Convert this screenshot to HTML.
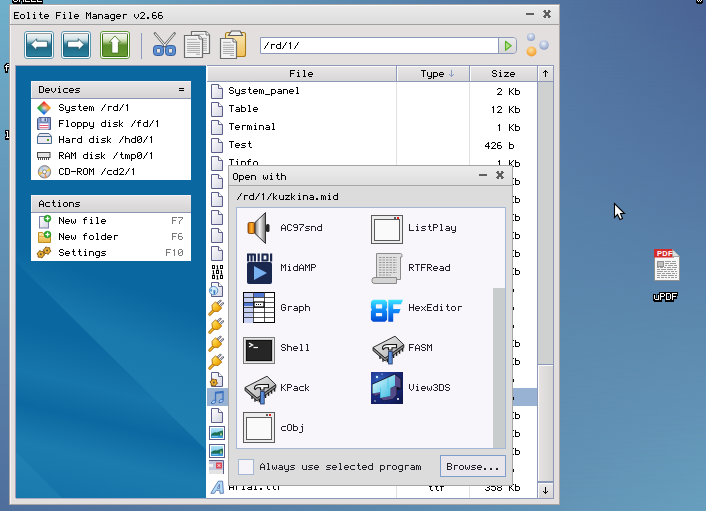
<!DOCTYPE html><html><head><meta charset="utf-8"><style>
html,body{margin:0;padding:0;width:706px;height:511px;overflow:hidden;position:relative}
body{background:linear-gradient(to right,#4f6e9b,#689fbe)}
.dtop{left:0;top:0;width:706px;height:511px;background:linear-gradient(to right,#70b0cb,#496394);-webkit-mask-image:linear-gradient(to bottom,#000,rgba(0,0,0,0));mask-image:linear-gradient(to bottom,#000,rgba(0,0,0,0))}
div{position:absolute;box-sizing:border-box}
.t{font:10px/10px "Liberation Mono",monospace;white-space:pre;color:#000;transform:translateZ(0);-webkit-text-stroke:0.2px currentColor}
.o{color:#fff;-webkit-text-stroke:0.3px #fff;text-shadow:1px 0 #000,-1px 0 #000,0 1px #000,0 -1px #000,1px 1px #000,-1px 1px #000,1px -1px #000,-1px -1px #000}
svg{position:absolute;overflow:visible}
</style></head><body>
<svg width="0" height="0" style="left:0;top:0"><defs>
<linearGradient id="docg" x1="0" y1="0" x2="1" y2="1"><stop offset="0" stop-color="#fff"/><stop offset="1" stop-color="#d4d4e2"/></linearGradient>
<linearGradient id="gold" x1="0" y1="0" x2="1" y2="1"><stop offset="0" stop-color="#fff0a0"/><stop offset="0.5" stop-color="#f8c020"/><stop offset="1" stop-color="#d88800"/></linearGradient>
<linearGradient id="fold" x1="0" y1="0" x2="0" y2="1"><stop offset="0" stop-color="#fbe8b0"/><stop offset="1" stop-color="#e8b440"/></linearGradient>
<radialGradient id="gb" cx="45%" cy="35%" r="65%"><stop offset="0" stop-color="#eef2fa"/><stop offset="1" stop-color="#8a9ec6"/></radialGradient>
<radialGradient id="go" cx="45%" cy="35%" r="65%"><stop offset="0" stop-color="#ffe0a0"/><stop offset="1" stop-color="#f09a28"/></radialGradient>
</defs></svg>
<div class="dtop"></div>
<svg style="left:13px;top:-5px" width="30" height="9" shape-rendering="crispEdges"><path d="M1 0h3v1h-3zM0 1h1v1h-1zM4 1h1v1h-1zM0 2h1v1h-1zM1 3h3v1h-3zM4 4h1v1h-1zM0 5h1v1h-1zM4 5h1v1h-1zM1 6h3v1h-3zM6 0h1v1h-1zM10 0h1v1h-1zM6 1h1v1h-1zM10 1h1v1h-1zM6 2h1v1h-1zM10 2h1v1h-1zM6 3h5v1h-5zM6 4h1v1h-1zM10 4h1v1h-1zM6 5h1v1h-1zM10 5h1v1h-1zM6 6h1v1h-1zM10 6h1v1h-1zM12 0h5v1h-5zM12 1h1v1h-1zM12 2h1v1h-1zM12 3h4v1h-4zM12 4h1v1h-1zM12 5h1v1h-1zM12 6h5v1h-5zM18 0h1v1h-1zM18 1h1v1h-1zM18 2h1v1h-1zM18 3h1v1h-1zM18 4h1v1h-1zM18 5h1v1h-1zM18 6h5v1h-5zM24 0h1v1h-1zM24 1h1v1h-1zM24 2h1v1h-1zM24 3h1v1h-1zM24 4h1v1h-1zM24 5h1v1h-1zM24 6h5v1h-5z" transform="translate(-1 0)" fill="#000"/><path d="M1 0h3v1h-3zM0 1h1v1h-1zM4 1h1v1h-1zM0 2h1v1h-1zM1 3h3v1h-3zM4 4h1v1h-1zM0 5h1v1h-1zM4 5h1v1h-1zM1 6h3v1h-3zM6 0h1v1h-1zM10 0h1v1h-1zM6 1h1v1h-1zM10 1h1v1h-1zM6 2h1v1h-1zM10 2h1v1h-1zM6 3h5v1h-5zM6 4h1v1h-1zM10 4h1v1h-1zM6 5h1v1h-1zM10 5h1v1h-1zM6 6h1v1h-1zM10 6h1v1h-1zM12 0h5v1h-5zM12 1h1v1h-1zM12 2h1v1h-1zM12 3h4v1h-4zM12 4h1v1h-1zM12 5h1v1h-1zM12 6h5v1h-5zM18 0h1v1h-1zM18 1h1v1h-1zM18 2h1v1h-1zM18 3h1v1h-1zM18 4h1v1h-1zM18 5h1v1h-1zM18 6h5v1h-5zM24 0h1v1h-1zM24 1h1v1h-1zM24 2h1v1h-1zM24 3h1v1h-1zM24 4h1v1h-1zM24 5h1v1h-1zM24 6h5v1h-5z" transform="translate(1 0)" fill="#000"/><path d="M1 0h3v1h-3zM0 1h1v1h-1zM4 1h1v1h-1zM0 2h1v1h-1zM1 3h3v1h-3zM4 4h1v1h-1zM0 5h1v1h-1zM4 5h1v1h-1zM1 6h3v1h-3zM6 0h1v1h-1zM10 0h1v1h-1zM6 1h1v1h-1zM10 1h1v1h-1zM6 2h1v1h-1zM10 2h1v1h-1zM6 3h5v1h-5zM6 4h1v1h-1zM10 4h1v1h-1zM6 5h1v1h-1zM10 5h1v1h-1zM6 6h1v1h-1zM10 6h1v1h-1zM12 0h5v1h-5zM12 1h1v1h-1zM12 2h1v1h-1zM12 3h4v1h-4zM12 4h1v1h-1zM12 5h1v1h-1zM12 6h5v1h-5zM18 0h1v1h-1zM18 1h1v1h-1zM18 2h1v1h-1zM18 3h1v1h-1zM18 4h1v1h-1zM18 5h1v1h-1zM18 6h5v1h-5zM24 0h1v1h-1zM24 1h1v1h-1zM24 2h1v1h-1zM24 3h1v1h-1zM24 4h1v1h-1zM24 5h1v1h-1zM24 6h5v1h-5z" transform="translate(0 -1)" fill="#000"/><path d="M1 0h3v1h-3zM0 1h1v1h-1zM4 1h1v1h-1zM0 2h1v1h-1zM1 3h3v1h-3zM4 4h1v1h-1zM0 5h1v1h-1zM4 5h1v1h-1zM1 6h3v1h-3zM6 0h1v1h-1zM10 0h1v1h-1zM6 1h1v1h-1zM10 1h1v1h-1zM6 2h1v1h-1zM10 2h1v1h-1zM6 3h5v1h-5zM6 4h1v1h-1zM10 4h1v1h-1zM6 5h1v1h-1zM10 5h1v1h-1zM6 6h1v1h-1zM10 6h1v1h-1zM12 0h5v1h-5zM12 1h1v1h-1zM12 2h1v1h-1zM12 3h4v1h-4zM12 4h1v1h-1zM12 5h1v1h-1zM12 6h5v1h-5zM18 0h1v1h-1zM18 1h1v1h-1zM18 2h1v1h-1zM18 3h1v1h-1zM18 4h1v1h-1zM18 5h1v1h-1zM18 6h5v1h-5zM24 0h1v1h-1zM24 1h1v1h-1zM24 2h1v1h-1zM24 3h1v1h-1zM24 4h1v1h-1zM24 5h1v1h-1zM24 6h5v1h-5z" transform="translate(0 1)" fill="#000"/><path d="M1 0h3v1h-3zM0 1h1v1h-1zM4 1h1v1h-1zM0 2h1v1h-1zM1 3h3v1h-3zM4 4h1v1h-1zM0 5h1v1h-1zM4 5h1v1h-1zM1 6h3v1h-3zM6 0h1v1h-1zM10 0h1v1h-1zM6 1h1v1h-1zM10 1h1v1h-1zM6 2h1v1h-1zM10 2h1v1h-1zM6 3h5v1h-5zM6 4h1v1h-1zM10 4h1v1h-1zM6 5h1v1h-1zM10 5h1v1h-1zM6 6h1v1h-1zM10 6h1v1h-1zM12 0h5v1h-5zM12 1h1v1h-1zM12 2h1v1h-1zM12 3h4v1h-4zM12 4h1v1h-1zM12 5h1v1h-1zM12 6h5v1h-5zM18 0h1v1h-1zM18 1h1v1h-1zM18 2h1v1h-1zM18 3h1v1h-1zM18 4h1v1h-1zM18 5h1v1h-1zM18 6h5v1h-5zM24 0h1v1h-1zM24 1h1v1h-1zM24 2h1v1h-1zM24 3h1v1h-1zM24 4h1v1h-1zM24 5h1v1h-1zM24 6h5v1h-5z" transform="translate(-1 -1)" fill="#000"/><path d="M1 0h3v1h-3zM0 1h1v1h-1zM4 1h1v1h-1zM0 2h1v1h-1zM1 3h3v1h-3zM4 4h1v1h-1zM0 5h1v1h-1zM4 5h1v1h-1zM1 6h3v1h-3zM6 0h1v1h-1zM10 0h1v1h-1zM6 1h1v1h-1zM10 1h1v1h-1zM6 2h1v1h-1zM10 2h1v1h-1zM6 3h5v1h-5zM6 4h1v1h-1zM10 4h1v1h-1zM6 5h1v1h-1zM10 5h1v1h-1zM6 6h1v1h-1zM10 6h1v1h-1zM12 0h5v1h-5zM12 1h1v1h-1zM12 2h1v1h-1zM12 3h4v1h-4zM12 4h1v1h-1zM12 5h1v1h-1zM12 6h5v1h-5zM18 0h1v1h-1zM18 1h1v1h-1zM18 2h1v1h-1zM18 3h1v1h-1zM18 4h1v1h-1zM18 5h1v1h-1zM18 6h5v1h-5zM24 0h1v1h-1zM24 1h1v1h-1zM24 2h1v1h-1zM24 3h1v1h-1zM24 4h1v1h-1zM24 5h1v1h-1zM24 6h5v1h-5z" transform="translate(1 1)" fill="#000"/><path d="M1 0h3v1h-3zM0 1h1v1h-1zM4 1h1v1h-1zM0 2h1v1h-1zM1 3h3v1h-3zM4 4h1v1h-1zM0 5h1v1h-1zM4 5h1v1h-1zM1 6h3v1h-3zM6 0h1v1h-1zM10 0h1v1h-1zM6 1h1v1h-1zM10 1h1v1h-1zM6 2h1v1h-1zM10 2h1v1h-1zM6 3h5v1h-5zM6 4h1v1h-1zM10 4h1v1h-1zM6 5h1v1h-1zM10 5h1v1h-1zM6 6h1v1h-1zM10 6h1v1h-1zM12 0h5v1h-5zM12 1h1v1h-1zM12 2h1v1h-1zM12 3h4v1h-4zM12 4h1v1h-1zM12 5h1v1h-1zM12 6h5v1h-5zM18 0h1v1h-1zM18 1h1v1h-1zM18 2h1v1h-1zM18 3h1v1h-1zM18 4h1v1h-1zM18 5h1v1h-1zM18 6h5v1h-5zM24 0h1v1h-1zM24 1h1v1h-1zM24 2h1v1h-1zM24 3h1v1h-1zM24 4h1v1h-1zM24 5h1v1h-1zM24 6h5v1h-5z" transform="translate(-1 1)" fill="#000"/><path d="M1 0h3v1h-3zM0 1h1v1h-1zM4 1h1v1h-1zM0 2h1v1h-1zM1 3h3v1h-3zM4 4h1v1h-1zM0 5h1v1h-1zM4 5h1v1h-1zM1 6h3v1h-3zM6 0h1v1h-1zM10 0h1v1h-1zM6 1h1v1h-1zM10 1h1v1h-1zM6 2h1v1h-1zM10 2h1v1h-1zM6 3h5v1h-5zM6 4h1v1h-1zM10 4h1v1h-1zM6 5h1v1h-1zM10 5h1v1h-1zM6 6h1v1h-1zM10 6h1v1h-1zM12 0h5v1h-5zM12 1h1v1h-1zM12 2h1v1h-1zM12 3h4v1h-4zM12 4h1v1h-1zM12 5h1v1h-1zM12 6h5v1h-5zM18 0h1v1h-1zM18 1h1v1h-1zM18 2h1v1h-1zM18 3h1v1h-1zM18 4h1v1h-1zM18 5h1v1h-1zM18 6h5v1h-5zM24 0h1v1h-1zM24 1h1v1h-1zM24 2h1v1h-1zM24 3h1v1h-1zM24 4h1v1h-1zM24 5h1v1h-1zM24 6h5v1h-5z" transform="translate(1 -1)" fill="#000"/><path d="M1 0h3v1h-3zM0 1h1v1h-1zM4 1h1v1h-1zM0 2h1v1h-1zM1 3h3v1h-3zM4 4h1v1h-1zM0 5h1v1h-1zM4 5h1v1h-1zM1 6h3v1h-3zM6 0h1v1h-1zM10 0h1v1h-1zM6 1h1v1h-1zM10 1h1v1h-1zM6 2h1v1h-1zM10 2h1v1h-1zM6 3h5v1h-5zM6 4h1v1h-1zM10 4h1v1h-1zM6 5h1v1h-1zM10 5h1v1h-1zM6 6h1v1h-1zM10 6h1v1h-1zM12 0h5v1h-5zM12 1h1v1h-1zM12 2h1v1h-1zM12 3h4v1h-4zM12 4h1v1h-1zM12 5h1v1h-1zM12 6h5v1h-5zM18 0h1v1h-1zM18 1h1v1h-1zM18 2h1v1h-1zM18 3h1v1h-1zM18 4h1v1h-1zM18 5h1v1h-1zM18 6h5v1h-5zM24 0h1v1h-1zM24 1h1v1h-1zM24 2h1v1h-1zM24 3h1v1h-1zM24 4h1v1h-1zM24 5h1v1h-1zM24 6h5v1h-5z" transform="translate(0 2)" fill="#000"/><path d="M1 0h3v1h-3zM0 1h1v1h-1zM4 1h1v1h-1zM0 2h1v1h-1zM1 3h3v1h-3zM4 4h1v1h-1zM0 5h1v1h-1zM4 5h1v1h-1zM1 6h3v1h-3zM6 0h1v1h-1zM10 0h1v1h-1zM6 1h1v1h-1zM10 1h1v1h-1zM6 2h1v1h-1zM10 2h1v1h-1zM6 3h5v1h-5zM6 4h1v1h-1zM10 4h1v1h-1zM6 5h1v1h-1zM10 5h1v1h-1zM6 6h1v1h-1zM10 6h1v1h-1zM12 0h5v1h-5zM12 1h1v1h-1zM12 2h1v1h-1zM12 3h4v1h-4zM12 4h1v1h-1zM12 5h1v1h-1zM12 6h5v1h-5zM18 0h1v1h-1zM18 1h1v1h-1zM18 2h1v1h-1zM18 3h1v1h-1zM18 4h1v1h-1zM18 5h1v1h-1zM18 6h5v1h-5zM24 0h1v1h-1zM24 1h1v1h-1zM24 2h1v1h-1zM24 3h1v1h-1zM24 4h1v1h-1zM24 5h1v1h-1zM24 6h5v1h-5z" transform="translate(1 2)" fill="#000"/><path d="M1 0h3v1h-3zM0 1h1v1h-1zM4 1h1v1h-1zM0 2h1v1h-1zM1 3h3v1h-3zM4 4h1v1h-1zM0 5h1v1h-1zM4 5h1v1h-1zM1 6h3v1h-3zM6 0h1v1h-1zM10 0h1v1h-1zM6 1h1v1h-1zM10 1h1v1h-1zM6 2h1v1h-1zM10 2h1v1h-1zM6 3h5v1h-5zM6 4h1v1h-1zM10 4h1v1h-1zM6 5h1v1h-1zM10 5h1v1h-1zM6 6h1v1h-1zM10 6h1v1h-1zM12 0h5v1h-5zM12 1h1v1h-1zM12 2h1v1h-1zM12 3h4v1h-4zM12 4h1v1h-1zM12 5h1v1h-1zM12 6h5v1h-5zM18 0h1v1h-1zM18 1h1v1h-1zM18 2h1v1h-1zM18 3h1v1h-1zM18 4h1v1h-1zM18 5h1v1h-1zM18 6h5v1h-5zM24 0h1v1h-1zM24 1h1v1h-1zM24 2h1v1h-1zM24 3h1v1h-1zM24 4h1v1h-1zM24 5h1v1h-1zM24 6h5v1h-5z" transform="translate(-1 2)" fill="#000"/><path d="M1 0h3v1h-3zM0 1h1v1h-1zM4 1h1v1h-1zM0 2h1v1h-1zM1 3h3v1h-3zM4 4h1v1h-1zM0 5h1v1h-1zM4 5h1v1h-1zM1 6h3v1h-3zM6 0h1v1h-1zM10 0h1v1h-1zM6 1h1v1h-1zM10 1h1v1h-1zM6 2h1v1h-1zM10 2h1v1h-1zM6 3h5v1h-5zM6 4h1v1h-1zM10 4h1v1h-1zM6 5h1v1h-1zM10 5h1v1h-1zM6 6h1v1h-1zM10 6h1v1h-1zM12 0h5v1h-5zM12 1h1v1h-1zM12 2h1v1h-1zM12 3h4v1h-4zM12 4h1v1h-1zM12 5h1v1h-1zM12 6h5v1h-5zM18 0h1v1h-1zM18 1h1v1h-1zM18 2h1v1h-1zM18 3h1v1h-1zM18 4h1v1h-1zM18 5h1v1h-1zM18 6h5v1h-5zM24 0h1v1h-1zM24 1h1v1h-1zM24 2h1v1h-1zM24 3h1v1h-1zM24 4h1v1h-1zM24 5h1v1h-1zM24 6h5v1h-5z" fill="#fff"/></svg>
<svg style="left:697px;top:-5px" width="6" height="9" shape-rendering="crispEdges"><path d="M0 2h1v1h-1zM4 2h1v1h-1zM0 3h1v1h-1zM4 3h1v1h-1zM0 4h1v1h-1zM2 4h1v1h-1zM4 4h1v1h-1zM0 5h1v1h-1zM2 5h1v1h-1zM4 5h1v1h-1zM1 6h1v1h-1zM3 6h1v1h-1z" transform="translate(-1 0)" fill="#000"/><path d="M0 2h1v1h-1zM4 2h1v1h-1zM0 3h1v1h-1zM4 3h1v1h-1zM0 4h1v1h-1zM2 4h1v1h-1zM4 4h1v1h-1zM0 5h1v1h-1zM2 5h1v1h-1zM4 5h1v1h-1zM1 6h1v1h-1zM3 6h1v1h-1z" transform="translate(1 0)" fill="#000"/><path d="M0 2h1v1h-1zM4 2h1v1h-1zM0 3h1v1h-1zM4 3h1v1h-1zM0 4h1v1h-1zM2 4h1v1h-1zM4 4h1v1h-1zM0 5h1v1h-1zM2 5h1v1h-1zM4 5h1v1h-1zM1 6h1v1h-1zM3 6h1v1h-1z" transform="translate(0 -1)" fill="#000"/><path d="M0 2h1v1h-1zM4 2h1v1h-1zM0 3h1v1h-1zM4 3h1v1h-1zM0 4h1v1h-1zM2 4h1v1h-1zM4 4h1v1h-1zM0 5h1v1h-1zM2 5h1v1h-1zM4 5h1v1h-1zM1 6h1v1h-1zM3 6h1v1h-1z" transform="translate(0 1)" fill="#000"/><path d="M0 2h1v1h-1zM4 2h1v1h-1zM0 3h1v1h-1zM4 3h1v1h-1zM0 4h1v1h-1zM2 4h1v1h-1zM4 4h1v1h-1zM0 5h1v1h-1zM2 5h1v1h-1zM4 5h1v1h-1zM1 6h1v1h-1zM3 6h1v1h-1z" transform="translate(-1 -1)" fill="#000"/><path d="M0 2h1v1h-1zM4 2h1v1h-1zM0 3h1v1h-1zM4 3h1v1h-1zM0 4h1v1h-1zM2 4h1v1h-1zM4 4h1v1h-1zM0 5h1v1h-1zM2 5h1v1h-1zM4 5h1v1h-1zM1 6h1v1h-1zM3 6h1v1h-1z" transform="translate(1 1)" fill="#000"/><path d="M0 2h1v1h-1zM4 2h1v1h-1zM0 3h1v1h-1zM4 3h1v1h-1zM0 4h1v1h-1zM2 4h1v1h-1zM4 4h1v1h-1zM0 5h1v1h-1zM2 5h1v1h-1zM4 5h1v1h-1zM1 6h1v1h-1zM3 6h1v1h-1z" transform="translate(-1 1)" fill="#000"/><path d="M0 2h1v1h-1zM4 2h1v1h-1zM0 3h1v1h-1zM4 3h1v1h-1zM0 4h1v1h-1zM2 4h1v1h-1zM4 4h1v1h-1zM0 5h1v1h-1zM2 5h1v1h-1zM4 5h1v1h-1zM1 6h1v1h-1zM3 6h1v1h-1z" transform="translate(1 -1)" fill="#000"/><path d="M0 2h1v1h-1zM4 2h1v1h-1zM0 3h1v1h-1zM4 3h1v1h-1zM0 4h1v1h-1zM2 4h1v1h-1zM4 4h1v1h-1zM0 5h1v1h-1zM2 5h1v1h-1zM4 5h1v1h-1zM1 6h1v1h-1zM3 6h1v1h-1z" transform="translate(0 2)" fill="#000"/><path d="M0 2h1v1h-1zM4 2h1v1h-1zM0 3h1v1h-1zM4 3h1v1h-1zM0 4h1v1h-1zM2 4h1v1h-1zM4 4h1v1h-1zM0 5h1v1h-1zM2 5h1v1h-1zM4 5h1v1h-1zM1 6h1v1h-1zM3 6h1v1h-1z" transform="translate(1 2)" fill="#000"/><path d="M0 2h1v1h-1zM4 2h1v1h-1zM0 3h1v1h-1zM4 3h1v1h-1zM0 4h1v1h-1zM2 4h1v1h-1zM4 4h1v1h-1zM0 5h1v1h-1zM2 5h1v1h-1zM4 5h1v1h-1zM1 6h1v1h-1zM3 6h1v1h-1z" transform="translate(-1 2)" fill="#000"/><path d="M0 2h1v1h-1zM4 2h1v1h-1zM0 3h1v1h-1zM4 3h1v1h-1zM0 4h1v1h-1zM2 4h1v1h-1zM4 4h1v1h-1zM0 5h1v1h-1zM2 5h1v1h-1zM4 5h1v1h-1zM1 6h1v1h-1zM3 6h1v1h-1z" fill="#fff"/></svg>
<svg style="left:5px;top:64px" width="6" height="9" shape-rendering="crispEdges"><path d="M2 0h2v1h-2zM1 1h1v1h-1zM0 2h4v1h-4zM1 3h1v1h-1zM1 4h1v1h-1zM1 5h1v1h-1zM1 6h1v1h-1z" transform="translate(-1 0)" fill="#000"/><path d="M2 0h2v1h-2zM1 1h1v1h-1zM0 2h4v1h-4zM1 3h1v1h-1zM1 4h1v1h-1zM1 5h1v1h-1zM1 6h1v1h-1z" transform="translate(1 0)" fill="#000"/><path d="M2 0h2v1h-2zM1 1h1v1h-1zM0 2h4v1h-4zM1 3h1v1h-1zM1 4h1v1h-1zM1 5h1v1h-1zM1 6h1v1h-1z" transform="translate(0 -1)" fill="#000"/><path d="M2 0h2v1h-2zM1 1h1v1h-1zM0 2h4v1h-4zM1 3h1v1h-1zM1 4h1v1h-1zM1 5h1v1h-1zM1 6h1v1h-1z" transform="translate(0 1)" fill="#000"/><path d="M2 0h2v1h-2zM1 1h1v1h-1zM0 2h4v1h-4zM1 3h1v1h-1zM1 4h1v1h-1zM1 5h1v1h-1zM1 6h1v1h-1z" transform="translate(-1 -1)" fill="#000"/><path d="M2 0h2v1h-2zM1 1h1v1h-1zM0 2h4v1h-4zM1 3h1v1h-1zM1 4h1v1h-1zM1 5h1v1h-1zM1 6h1v1h-1z" transform="translate(1 1)" fill="#000"/><path d="M2 0h2v1h-2zM1 1h1v1h-1zM0 2h4v1h-4zM1 3h1v1h-1zM1 4h1v1h-1zM1 5h1v1h-1zM1 6h1v1h-1z" transform="translate(-1 1)" fill="#000"/><path d="M2 0h2v1h-2zM1 1h1v1h-1zM0 2h4v1h-4zM1 3h1v1h-1zM1 4h1v1h-1zM1 5h1v1h-1zM1 6h1v1h-1z" transform="translate(1 -1)" fill="#000"/><path d="M2 0h2v1h-2zM1 1h1v1h-1zM0 2h4v1h-4zM1 3h1v1h-1zM1 4h1v1h-1zM1 5h1v1h-1zM1 6h1v1h-1z" transform="translate(0 2)" fill="#000"/><path d="M2 0h2v1h-2zM1 1h1v1h-1zM0 2h4v1h-4zM1 3h1v1h-1zM1 4h1v1h-1zM1 5h1v1h-1zM1 6h1v1h-1z" transform="translate(1 2)" fill="#000"/><path d="M2 0h2v1h-2zM1 1h1v1h-1zM0 2h4v1h-4zM1 3h1v1h-1zM1 4h1v1h-1zM1 5h1v1h-1zM1 6h1v1h-1z" transform="translate(-1 2)" fill="#000"/><path d="M2 0h2v1h-2zM1 1h1v1h-1zM0 2h4v1h-4zM1 3h1v1h-1zM1 4h1v1h-1zM1 5h1v1h-1zM1 6h1v1h-1z" fill="#fff"/></svg>
<svg style="left:5px;top:131px" width="6" height="9" shape-rendering="crispEdges"><path d="M1 0h2v1h-2zM2 1h1v1h-1zM2 2h1v1h-1zM2 3h1v1h-1zM2 4h1v1h-1zM2 5h1v1h-1zM1 6h3v1h-3z" transform="translate(-1 0)" fill="#000"/><path d="M1 0h2v1h-2zM2 1h1v1h-1zM2 2h1v1h-1zM2 3h1v1h-1zM2 4h1v1h-1zM2 5h1v1h-1zM1 6h3v1h-3z" transform="translate(1 0)" fill="#000"/><path d="M1 0h2v1h-2zM2 1h1v1h-1zM2 2h1v1h-1zM2 3h1v1h-1zM2 4h1v1h-1zM2 5h1v1h-1zM1 6h3v1h-3z" transform="translate(0 -1)" fill="#000"/><path d="M1 0h2v1h-2zM2 1h1v1h-1zM2 2h1v1h-1zM2 3h1v1h-1zM2 4h1v1h-1zM2 5h1v1h-1zM1 6h3v1h-3z" transform="translate(0 1)" fill="#000"/><path d="M1 0h2v1h-2zM2 1h1v1h-1zM2 2h1v1h-1zM2 3h1v1h-1zM2 4h1v1h-1zM2 5h1v1h-1zM1 6h3v1h-3z" transform="translate(-1 -1)" fill="#000"/><path d="M1 0h2v1h-2zM2 1h1v1h-1zM2 2h1v1h-1zM2 3h1v1h-1zM2 4h1v1h-1zM2 5h1v1h-1zM1 6h3v1h-3z" transform="translate(1 1)" fill="#000"/><path d="M1 0h2v1h-2zM2 1h1v1h-1zM2 2h1v1h-1zM2 3h1v1h-1zM2 4h1v1h-1zM2 5h1v1h-1zM1 6h3v1h-3z" transform="translate(-1 1)" fill="#000"/><path d="M1 0h2v1h-2zM2 1h1v1h-1zM2 2h1v1h-1zM2 3h1v1h-1zM2 4h1v1h-1zM2 5h1v1h-1zM1 6h3v1h-3z" transform="translate(1 -1)" fill="#000"/><path d="M1 0h2v1h-2zM2 1h1v1h-1zM2 2h1v1h-1zM2 3h1v1h-1zM2 4h1v1h-1zM2 5h1v1h-1zM1 6h3v1h-3z" transform="translate(0 2)" fill="#000"/><path d="M1 0h2v1h-2zM2 1h1v1h-1zM2 2h1v1h-1zM2 3h1v1h-1zM2 4h1v1h-1zM2 5h1v1h-1zM1 6h3v1h-3z" transform="translate(1 2)" fill="#000"/><path d="M1 0h2v1h-2zM2 1h1v1h-1zM2 2h1v1h-1zM2 3h1v1h-1zM2 4h1v1h-1zM2 5h1v1h-1zM1 6h3v1h-3z" transform="translate(-1 2)" fill="#000"/><path d="M1 0h2v1h-2zM2 1h1v1h-1zM2 2h1v1h-1zM2 3h1v1h-1zM2 4h1v1h-1zM2 5h1v1h-1zM1 6h3v1h-3z" fill="#fff"/></svg>
<div style="left:9px;top:4px;width:551px;height:501px;background:#e3dfdf;border:1px solid #a8a4a4;"></div>
<div style="left:10px;top:5px;width:549px;height:1px;background:#fafafa"></div>
<div style="left:10px;top:5px;width:1px;height:499px;background:#f4f2f2"></div>
<div style="left:11px;top:6px;width:548px;height:19px;background:linear-gradient(#eaeaea,#dcdcdc)"></div>
<div style="left:10px;top:24px;width:549px;height:1px;background:#a0a0a0"></div>
<svg style="left:14px;top:12px" width="150" height="9" shape-rendering="crispEdges"><path d="M0 0h5v1h-5zM0 1h1v1h-1zM0 2h1v1h-1zM0 3h4v1h-4zM0 4h1v1h-1zM0 5h1v1h-1zM0 6h5v1h-5zM7 2h3v1h-3zM6 3h1v1h-1zM10 3h1v1h-1zM6 4h1v1h-1zM10 4h1v1h-1zM6 5h1v1h-1zM10 5h1v1h-1zM7 6h3v1h-3zM13 0h2v1h-2zM14 1h1v1h-1zM14 2h1v1h-1zM14 3h1v1h-1zM14 4h1v1h-1zM14 5h1v1h-1zM13 6h3v1h-3zM20 0h1v1h-1zM19 2h2v1h-2zM20 3h1v1h-1zM20 4h1v1h-1zM20 5h1v1h-1zM19 6h3v1h-3zM26 0h1v1h-1zM26 1h1v1h-1zM25 2h3v1h-3zM26 3h1v1h-1zM26 4h1v1h-1zM26 5h1v1h-1zM27 6h2v1h-2zM31 2h3v1h-3zM30 3h1v1h-1zM34 3h1v1h-1zM30 4h5v1h-5zM30 5h1v1h-1zM31 6h3v1h-3zM42 0h5v1h-5zM42 1h1v1h-1zM42 2h1v1h-1zM42 3h4v1h-4zM42 4h1v1h-1zM42 5h1v1h-1zM42 6h1v1h-1zM50 0h1v1h-1zM49 2h2v1h-2zM50 3h1v1h-1zM50 4h1v1h-1zM50 5h1v1h-1zM49 6h3v1h-3zM55 0h2v1h-2zM56 1h1v1h-1zM56 2h1v1h-1zM56 3h1v1h-1zM56 4h1v1h-1zM56 5h1v1h-1zM55 6h3v1h-3zM61 2h3v1h-3zM60 3h1v1h-1zM64 3h1v1h-1zM60 4h5v1h-5zM60 5h1v1h-1zM61 6h3v1h-3zM72 0h1v1h-1zM76 0h1v1h-1zM72 1h2v1h-2zM75 1h2v1h-2zM72 2h1v1h-1zM74 2h1v1h-1zM76 2h1v1h-1zM72 3h1v1h-1zM74 3h1v1h-1zM76 3h1v1h-1zM72 4h1v1h-1zM76 4h1v1h-1zM72 5h1v1h-1zM76 5h1v1h-1zM72 6h1v1h-1zM76 6h1v1h-1zM79 2h3v1h-3zM82 3h1v1h-1zM79 4h4v1h-4zM78 5h1v1h-1zM82 5h1v1h-1zM79 6h4v1h-4zM84 2h4v1h-4zM84 3h1v1h-1zM88 3h1v1h-1zM84 4h1v1h-1zM88 4h1v1h-1zM84 5h1v1h-1zM88 5h1v1h-1zM84 6h1v1h-1zM88 6h1v1h-1zM91 2h3v1h-3zM94 3h1v1h-1zM91 4h4v1h-4zM90 5h1v1h-1zM94 5h1v1h-1zM91 6h4v1h-4zM97 2h4v1h-4zM96 3h1v1h-1zM100 3h1v1h-1zM96 4h1v1h-1zM100 4h1v1h-1zM96 5h1v1h-1zM100 5h1v1h-1zM97 6h4v1h-4zM100 7h1v1h-1zM97 8h3v1h-3zM103 2h3v1h-3zM102 3h1v1h-1zM106 3h1v1h-1zM102 4h5v1h-5zM102 5h1v1h-1zM103 6h3v1h-3zM109 2h4v1h-4zM109 3h1v1h-1zM109 4h1v1h-1zM109 5h1v1h-1zM109 6h1v1h-1zM120 2h1v1h-1zM124 2h1v1h-1zM120 3h1v1h-1zM124 3h1v1h-1zM120 4h1v1h-1zM124 4h1v1h-1zM121 5h1v1h-1zM123 5h1v1h-1zM122 6h1v1h-1zM127 0h3v1h-3zM126 1h1v1h-1zM130 1h1v1h-1zM130 2h1v1h-1zM129 3h1v1h-1zM128 4h1v1h-1zM127 5h1v1h-1zM126 6h5v1h-5zM133 5h2v1h-2zM133 6h2v1h-2zM139 0h3v1h-3zM138 1h1v1h-1zM138 2h1v1h-1zM138 3h4v1h-4zM138 4h1v1h-1zM142 4h1v1h-1zM138 5h1v1h-1zM142 5h1v1h-1zM139 6h3v1h-3zM145 0h3v1h-3zM144 1h1v1h-1zM144 2h1v1h-1zM144 3h4v1h-4zM144 4h1v1h-1zM148 4h1v1h-1zM144 5h1v1h-1zM148 5h1v1h-1zM145 6h3v1h-3z" fill="#000"/></svg>
<div style="left:526px;top:13px;width:8px;height:2px;background:#606060"></div>
<svg style="left:543px;top:10px" width="8" height="8" shape-rendering="crispEdges"><path d="M1 0h2v1h-2zM5 0h2v1h-2zM0 1h3v1h-3zM5 1h3v1h-3zM1 2h6v1h-6zM2 3h4v1h-4zM2 4h4v1h-4zM1 5h6v1h-6zM0 6h3v1h-3zM5 6h3v1h-3zM1 7h2v1h-2zM5 7h2v1h-2z" fill="#606060"/></svg>
<div style="left:24px;top:31px;width:30px;height:28px;border:1px solid #5898b0;border-radius:3px;background:#fff"></div>
<div style="left:26px;top:33px;width:26px;height:24px;border:1px solid #1e5e7a;border-top-color:#9a9a9a;border-radius:2px;background:linear-gradient(#eef2f4 0%, #d6e4e8 22%, #a8c8d4 32%, #2f7c98 46%, #1f6a86 60%, #2a82a0 100%)"></div>
<svg style="left:24px;top:31px" width="30" height="28"><path d="M7 13.5L12.7 7.7V10.2H23.4V16.2H12.7V19.3Z" fill="#fff" stroke="#174a60" stroke-width="0.8"/></svg>
<div style="left:61px;top:31px;width:30px;height:28px;border:1px solid #5898b0;border-radius:3px;background:#fff"></div>
<div style="left:63px;top:33px;width:26px;height:24px;border:1px solid #1e5e7a;border-top-color:#9a9a9a;border-radius:2px;background:linear-gradient(#eef2f4 0%, #d6e4e8 22%, #a8c8d4 32%, #2f7c98 46%, #1f6a86 60%, #2a82a0 100%)"></div>
<svg style="left:61px;top:31px" width="30" height="28"><path d="M23 13.5L17.3 7.7V10.2H6.6V16.2H17.3V19.3Z" fill="#fff" stroke="#174a60" stroke-width="0.8"/></svg>
<div style="left:100px;top:31px;width:30px;height:28px;border:1px solid #5a9a30;border-radius:3px;background:#fff"></div>
<div style="left:102px;top:33px;width:26px;height:24px;border:1px solid #3e6e1a;border-top-color:#9a9a9a;border-radius:2px;background:linear-gradient(#f2f6ea 0%, #dfe9cf 22%, #b8d098 34%, #5a8e2a 50%, #5c902c 70%, #6a9c34 100%)"></div>
<svg style="left:100px;top:31px" width="30" height="28"><path d="M14.9 4.9L20.5 11.1H18.4V22.1H11.8V11.1H9.3Z" fill="#fff" stroke="#3a6a18" stroke-width="0.8"/></svg>
<div style="left:141px;top:33px;width:1px;height:26px;background:#8c9ac0"></div>
<svg style="left:148px;top:28px" width="32" height="32" viewBox="0 0 32 32"><path d="M7 5.5L17.5 18M26.5 5.5L16 18" stroke="#5a5a5a" stroke-width="2.6" stroke-linecap="round"/>
<path d="M7 5.5L17.5 18M26.5 5.5L16 18" stroke="#fafafa" stroke-width="1.1"/>
<rect x="5.5" y="17.5" width="10" height="10" rx="3" fill="#5a90d4" stroke="#2a5090" stroke-width="0.9"/>
<rect x="17.5" y="17.5" width="10" height="10" rx="3" fill="#5a90d4" stroke="#2a5090" stroke-width="0.9"/>
<rect x="8.5" y="20.5" width="4" height="4.5" rx="1" fill="#e6e2e2" stroke="#2a5090" stroke-width="0.7"/>
<rect x="20.5" y="20.5" width="4" height="4.5" rx="1" fill="#e6e2e2" stroke="#2a5090" stroke-width="0.7"/></svg>
<svg style="left:180px;top:28px" width="32" height="32" viewBox="0 0 32 32"><path d="M11.5 3.5H26L29.5 7V25.5H11.5Z" fill="#f2f2f2" stroke="#6a6a6a" stroke-width="1.2"/>
<path d="M26 3.5V7H29.5" fill="#fff" stroke="#6a6a6a" stroke-width="1"/>
<path d="M14 6.3H24M23 10.3H27M23 12.3H27M23 14.3H27M23 16.3H27M23 18.3H27M23 20.3H27M23 22.3H27" stroke="#a4a4a4" stroke-width="0.9"/>
<path d="M4.5 7.5H19L22.5 11V29.5H4.5Z" fill="#f2f2f2" stroke="#6a6a6a" stroke-width="1.2"/>
<path d="M19 7.5V11H22.5" fill="#fff" stroke="#6a6a6a" stroke-width="1"/>
<path d="M7 11.3H17M7 14.4H20M7 16.4H20M7 18.5H20M7 20.4H20M7 22.4H20M7 24.4H20M16 26.3H20" stroke="#a4a4a4" stroke-width="0.9"/></svg>
<svg style="left:216px;top:28px" width="32" height="32" viewBox="0 0 32 32"><defs><linearGradient id="clipg" x1="0" y1="0" x2="0" y2="1"><stop offset="0" stop-color="#f8e8b8"/><stop offset="1" stop-color="#f0c058"/></linearGradient></defs>
<rect x="9.5" y="4.5" width="20" height="24" rx="2" fill="url(#clipg)" stroke="#a87a18" stroke-width="1.1"/>
<path d="M12.5 7.5L15.5 3H24L26.5 7.5Z" fill="#f0f0f0" stroke="#5a5a5a" stroke-width="1.1"/>
<path d="M4.5 10.5H17L20.5 14V30.5H4.5Z" fill="#f2f2f2" stroke="#6a6a6a" stroke-width="1.2"/>
<path d="M17 10.5V14H20.5" fill="#fff" stroke="#6a6a6a" stroke-width="1"/>
<path d="M7 14.4H15M7 17.2H18M7 19.4H18M7 21.4H18M7 23.5H18M7 25.5H18M14 27.4H18" stroke="#a4a4a4" stroke-width="0.9"/></svg>
<div style="left:260px;top:37px;width:257px;height:17px;border:1px solid #8a9ab8;border-radius:0 4px 4px 0;background:#e3dfdf"></div>
<div style="left:261px;top:38px;width:237px;height:15px;background:#fff"></div>
<div style="left:498px;top:38px;width:1px;height:15px;background:#8a9ab8"></div>
<div style="left:499px;top:38px;width:17px;height:15px;border-radius:0 3px 3px 0;background:linear-gradient(#ecebeb,#d8d6d6)"></div>
<svg style="left:264px;top:42px" width="36" height="9" shape-rendering="crispEdges"><path d="M4 0h1v1h-1zM3 1h1v1h-1zM3 2h1v1h-1zM2 3h1v1h-1zM1 4h1v1h-1zM1 5h1v1h-1zM0 6h1v1h-1zM7 2h4v1h-4zM7 3h1v1h-1zM7 4h1v1h-1zM7 5h1v1h-1zM7 6h1v1h-1zM16 0h1v1h-1zM16 1h1v1h-1zM13 2h4v1h-4zM12 3h1v1h-1zM16 3h1v1h-1zM12 4h1v1h-1zM16 4h1v1h-1zM12 5h1v1h-1zM16 5h1v1h-1zM13 6h4v1h-4zM22 0h1v1h-1zM21 1h1v1h-1zM21 2h1v1h-1zM20 3h1v1h-1zM19 4h1v1h-1zM19 5h1v1h-1zM18 6h1v1h-1zM26 0h1v1h-1zM25 1h2v1h-2zM26 2h1v1h-1zM26 3h1v1h-1zM26 4h1v1h-1zM26 5h1v1h-1zM26 6h1v1h-1zM34 0h1v1h-1zM33 1h1v1h-1zM33 2h1v1h-1zM32 3h1v1h-1zM31 4h1v1h-1zM31 5h1v1h-1zM30 6h1v1h-1z" fill="#000"/></svg>
<svg style="left:504px;top:39px" width="10" height="13" viewBox="0 0 10 13"><path d="M1.5 2.3L7.2 6.8L1.5 11.3Z" fill="#b0e080" stroke="#58b028" stroke-width="1.1" stroke-linejoin="round"/></svg>
<svg style="left:522px;top:30px" width="30" height="30" viewBox="0 0 30 30"><circle cx="9" cy="7" r="4" fill="url(#gb)"/><circle cx="22" cy="15" r="4.8" fill="url(#gb)"/><circle cx="9.5" cy="21.5" r="5" fill="url(#go)"/></svg>
<div style="left:16px;top:65px;width:190px;height:433px;background:#0a67a0;overflow:hidden">
<div style="left:0;top:0;width:190px;height:433px;clip-path:polygon(0 0,190px 0,190px 385px,0 197px);background:linear-gradient(200deg, rgba(60,160,200,0) 0%, rgba(60,160,200,0) 50%, rgba(60,160,200,0.30) 60%, rgba(60,160,200,0.40) 72%, rgba(60,160,200,0.36) 100%)"></div>
<div style="left:0;top:0;width:190px;height:433px;clip-path:polygon(0 197px,190px 385px,190px 433px,0 433px);background:linear-gradient(193deg, rgba(60,160,200,0) 0%, rgba(60,160,200,0) 63%, rgba(60,160,200,0.26) 73%, rgba(60,160,200,0.03) 80%, rgba(60,160,200,0.36) 88%, rgba(60,160,200,0.16) 100%)"></div>
<div style="left:0;top:0;width:190px;height:433px;clip-path:polygon(0 387px,46px 433px,0 433px);background:rgba(60,160,200,0.2)"></div>
</div>
<div style="left:15px;top:65px;width:1px;height:433px;background:#a09cb4"></div>
<div style="left:15px;top:65px;width:192px;height:1px;background:#a09cb4"></div>
<div style="left:31px;top:81px;width:160px;height:99px;background:#fff"></div>
<div style="left:31px;top:81px;width:160px;height:17px;background:linear-gradient(#e8e6e6,#d6d4d4)"></div>
<div style="left:31px;top:81px;width:160px;height:1px;background:#f4f2f2"></div>
<div style="left:31px;top:81px;width:1px;height:17px;background:#f4f2f2"></div>
<div style="left:31px;top:98px;width:160px;height:1px;background:#8c94b4"></div>
<svg style="left:39px;top:86px" width="42" height="9" shape-rendering="crispEdges"><path d="M0 0h4v1h-4zM0 1h1v1h-1zM4 1h1v1h-1zM0 2h1v1h-1zM4 2h1v1h-1zM0 3h1v1h-1zM4 3h1v1h-1zM0 4h1v1h-1zM4 4h1v1h-1zM0 5h1v1h-1zM4 5h1v1h-1zM0 6h4v1h-4zM7 2h3v1h-3zM6 3h1v1h-1zM10 3h1v1h-1zM6 4h5v1h-5zM6 5h1v1h-1zM7 6h3v1h-3zM12 2h1v1h-1zM16 2h1v1h-1zM12 3h1v1h-1zM16 3h1v1h-1zM12 4h1v1h-1zM16 4h1v1h-1zM13 5h1v1h-1zM15 5h1v1h-1zM14 6h1v1h-1zM20 0h1v1h-1zM19 2h2v1h-2zM20 3h1v1h-1zM20 4h1v1h-1zM20 5h1v1h-1zM19 6h3v1h-3zM25 2h4v1h-4zM24 3h1v1h-1zM24 4h1v1h-1zM24 5h1v1h-1zM25 6h4v1h-4zM31 2h3v1h-3zM30 3h1v1h-1zM34 3h1v1h-1zM30 4h5v1h-5zM30 5h1v1h-1zM31 6h3v1h-3zM37 2h4v1h-4zM36 3h1v1h-1zM37 4h3v1h-3zM40 5h1v1h-1zM36 6h4v1h-4z" fill="#000"/></svg>
<svg style="left:179px;top:86px" width="6" height="9" shape-rendering="crispEdges"><path d="M0 2h5v1h-5zM0 4h5v1h-5z" fill="#000"/></svg>
<div style="left:31px;top:195px;width:160px;height:66px;background:#fff"></div>
<div style="left:31px;top:195px;width:160px;height:17px;background:linear-gradient(#e8e6e6,#d6d4d4)"></div>
<div style="left:31px;top:195px;width:160px;height:1px;background:#f4f2f2"></div>
<div style="left:31px;top:195px;width:1px;height:17px;background:#f4f2f2"></div>
<div style="left:31px;top:212px;width:160px;height:1px;background:#8c94b4"></div>
<svg style="left:39px;top:200px" width="42" height="9" shape-rendering="crispEdges"><path d="M2 0h1v1h-1zM1 1h1v1h-1zM3 1h1v1h-1zM0 2h1v1h-1zM4 2h1v1h-1zM0 3h1v1h-1zM4 3h1v1h-1zM0 4h5v1h-5zM0 5h1v1h-1zM4 5h1v1h-1zM0 6h1v1h-1zM4 6h1v1h-1zM7 2h4v1h-4zM6 3h1v1h-1zM6 4h1v1h-1zM6 5h1v1h-1zM7 6h4v1h-4zM14 0h1v1h-1zM14 1h1v1h-1zM13 2h3v1h-3zM14 3h1v1h-1zM14 4h1v1h-1zM14 5h1v1h-1zM15 6h2v1h-2zM20 0h1v1h-1zM19 2h2v1h-2zM20 3h1v1h-1zM20 4h1v1h-1zM20 5h1v1h-1zM19 6h3v1h-3zM25 2h3v1h-3zM24 3h1v1h-1zM28 3h1v1h-1zM24 4h1v1h-1zM28 4h1v1h-1zM24 5h1v1h-1zM28 5h1v1h-1zM25 6h3v1h-3zM30 2h4v1h-4zM30 3h1v1h-1zM34 3h1v1h-1zM30 4h1v1h-1zM34 4h1v1h-1zM30 5h1v1h-1zM34 5h1v1h-1zM30 6h1v1h-1zM34 6h1v1h-1zM37 2h4v1h-4zM36 3h1v1h-1zM37 4h3v1h-3zM40 5h1v1h-1zM36 6h4v1h-4z" fill="#000"/></svg>
<svg style="left:59px;top:104px" width="72" height="9" shape-rendering="crispEdges"><path d="M1 0h3v1h-3zM0 1h1v1h-1zM4 1h1v1h-1zM0 2h1v1h-1zM1 3h3v1h-3zM4 4h1v1h-1zM0 5h1v1h-1zM4 5h1v1h-1zM1 6h3v1h-3zM6 2h1v1h-1zM10 2h1v1h-1zM6 3h1v1h-1zM10 3h1v1h-1zM6 4h1v1h-1zM10 4h1v1h-1zM6 5h1v1h-1zM10 5h1v1h-1zM7 6h4v1h-4zM10 7h1v1h-1zM7 8h3v1h-3zM13 2h4v1h-4zM12 3h1v1h-1zM13 4h3v1h-3zM16 5h1v1h-1zM12 6h4v1h-4zM20 0h1v1h-1zM20 1h1v1h-1zM19 2h3v1h-3zM20 3h1v1h-1zM20 4h1v1h-1zM20 5h1v1h-1zM21 6h2v1h-2zM25 2h3v1h-3zM24 3h1v1h-1zM28 3h1v1h-1zM24 4h5v1h-5zM24 5h1v1h-1zM25 6h3v1h-3zM30 2h2v1h-2zM33 2h1v1h-1zM30 3h1v1h-1zM32 3h1v1h-1zM34 3h1v1h-1zM30 4h1v1h-1zM32 4h1v1h-1zM34 4h1v1h-1zM30 5h1v1h-1zM32 5h1v1h-1zM34 5h1v1h-1zM30 6h1v1h-1zM32 6h1v1h-1zM34 6h1v1h-1zM46 0h1v1h-1zM45 1h1v1h-1zM45 2h1v1h-1zM44 3h1v1h-1zM43 4h1v1h-1zM43 5h1v1h-1zM42 6h1v1h-1zM49 2h4v1h-4zM49 3h1v1h-1zM49 4h1v1h-1zM49 5h1v1h-1zM49 6h1v1h-1zM58 0h1v1h-1zM58 1h1v1h-1zM55 2h4v1h-4zM54 3h1v1h-1zM58 3h1v1h-1zM54 4h1v1h-1zM58 4h1v1h-1zM54 5h1v1h-1zM58 5h1v1h-1zM55 6h4v1h-4zM64 0h1v1h-1zM63 1h1v1h-1zM63 2h1v1h-1zM62 3h1v1h-1zM61 4h1v1h-1zM61 5h1v1h-1zM60 6h1v1h-1zM68 0h1v1h-1zM67 1h2v1h-2zM68 2h1v1h-1zM68 3h1v1h-1zM68 4h1v1h-1zM68 5h1v1h-1zM68 6h1v1h-1z" fill="#000"/></svg>
<svg style="left:59px;top:120px" width="102" height="9" shape-rendering="crispEdges"><path d="M0 0h5v1h-5zM0 1h1v1h-1zM0 2h1v1h-1zM0 3h4v1h-4zM0 4h1v1h-1zM0 5h1v1h-1zM0 6h1v1h-1zM7 0h2v1h-2zM8 1h1v1h-1zM8 2h1v1h-1zM8 3h1v1h-1zM8 4h1v1h-1zM8 5h1v1h-1zM7 6h3v1h-3zM13 2h3v1h-3zM12 3h1v1h-1zM16 3h1v1h-1zM12 4h1v1h-1zM16 4h1v1h-1zM12 5h1v1h-1zM16 5h1v1h-1zM13 6h3v1h-3zM18 2h4v1h-4zM18 3h1v1h-1zM22 3h1v1h-1zM18 4h1v1h-1zM22 4h1v1h-1zM18 5h1v1h-1zM22 5h1v1h-1zM18 6h4v1h-4zM18 7h1v1h-1zM18 8h1v1h-1zM24 2h4v1h-4zM24 3h1v1h-1zM28 3h1v1h-1zM24 4h1v1h-1zM28 4h1v1h-1zM24 5h1v1h-1zM28 5h1v1h-1zM24 6h4v1h-4zM24 7h1v1h-1zM24 8h1v1h-1zM30 2h1v1h-1zM34 2h1v1h-1zM30 3h1v1h-1zM34 3h1v1h-1zM30 4h1v1h-1zM34 4h1v1h-1zM30 5h1v1h-1zM34 5h1v1h-1zM31 6h4v1h-4zM34 7h1v1h-1zM31 8h3v1h-3zM46 0h1v1h-1zM46 1h1v1h-1zM43 2h4v1h-4zM42 3h1v1h-1zM46 3h1v1h-1zM42 4h1v1h-1zM46 4h1v1h-1zM42 5h1v1h-1zM46 5h1v1h-1zM43 6h4v1h-4zM50 0h1v1h-1zM49 2h2v1h-2zM50 3h1v1h-1zM50 4h1v1h-1zM50 5h1v1h-1zM49 6h3v1h-3zM55 2h4v1h-4zM54 3h1v1h-1zM55 4h3v1h-3zM58 5h1v1h-1zM54 6h4v1h-4zM60 0h1v1h-1zM60 1h1v1h-1zM60 2h1v1h-1zM63 2h1v1h-1zM60 3h1v1h-1zM62 3h1v1h-1zM60 4h2v1h-2zM60 5h1v1h-1zM62 5h1v1h-1zM60 6h1v1h-1zM63 6h1v1h-1zM76 0h1v1h-1zM75 1h1v1h-1zM75 2h1v1h-1zM74 3h1v1h-1zM73 4h1v1h-1zM73 5h1v1h-1zM72 6h1v1h-1zM80 0h2v1h-2zM79 1h1v1h-1zM78 2h4v1h-4zM79 3h1v1h-1zM79 4h1v1h-1zM79 5h1v1h-1zM79 6h1v1h-1zM88 0h1v1h-1zM88 1h1v1h-1zM85 2h4v1h-4zM84 3h1v1h-1zM88 3h1v1h-1zM84 4h1v1h-1zM88 4h1v1h-1zM84 5h1v1h-1zM88 5h1v1h-1zM85 6h4v1h-4zM94 0h1v1h-1zM93 1h1v1h-1zM93 2h1v1h-1zM92 3h1v1h-1zM91 4h1v1h-1zM91 5h1v1h-1zM90 6h1v1h-1zM98 0h1v1h-1zM97 1h2v1h-2zM98 2h1v1h-1zM98 3h1v1h-1zM98 4h1v1h-1zM98 5h1v1h-1zM98 6h1v1h-1z" fill="#000"/></svg>
<svg style="left:59px;top:136px" width="96" height="9" shape-rendering="crispEdges"><path d="M0 0h1v1h-1zM4 0h1v1h-1zM0 1h1v1h-1zM4 1h1v1h-1zM0 2h1v1h-1zM4 2h1v1h-1zM0 3h5v1h-5zM0 4h1v1h-1zM4 4h1v1h-1zM0 5h1v1h-1zM4 5h1v1h-1zM0 6h1v1h-1zM4 6h1v1h-1zM7 2h3v1h-3zM10 3h1v1h-1zM7 4h4v1h-4zM6 5h1v1h-1zM10 5h1v1h-1zM7 6h4v1h-4zM13 2h4v1h-4zM13 3h1v1h-1zM13 4h1v1h-1zM13 5h1v1h-1zM13 6h1v1h-1zM22 0h1v1h-1zM22 1h1v1h-1zM19 2h4v1h-4zM18 3h1v1h-1zM22 3h1v1h-1zM18 4h1v1h-1zM22 4h1v1h-1zM18 5h1v1h-1zM22 5h1v1h-1zM19 6h4v1h-4zM34 0h1v1h-1zM34 1h1v1h-1zM31 2h4v1h-4zM30 3h1v1h-1zM34 3h1v1h-1zM30 4h1v1h-1zM34 4h1v1h-1zM30 5h1v1h-1zM34 5h1v1h-1zM31 6h4v1h-4zM38 0h1v1h-1zM37 2h2v1h-2zM38 3h1v1h-1zM38 4h1v1h-1zM38 5h1v1h-1zM37 6h3v1h-3zM43 2h4v1h-4zM42 3h1v1h-1zM43 4h3v1h-3zM46 5h1v1h-1zM42 6h4v1h-4zM48 0h1v1h-1zM48 1h1v1h-1zM48 2h1v1h-1zM51 2h1v1h-1zM48 3h1v1h-1zM50 3h1v1h-1zM48 4h2v1h-2zM48 5h1v1h-1zM50 5h1v1h-1zM48 6h1v1h-1zM51 6h1v1h-1zM64 0h1v1h-1zM63 1h1v1h-1zM63 2h1v1h-1zM62 3h1v1h-1zM61 4h1v1h-1zM61 5h1v1h-1zM60 6h1v1h-1zM66 0h1v1h-1zM66 1h1v1h-1zM66 2h4v1h-4zM66 3h1v1h-1zM70 3h1v1h-1zM66 4h1v1h-1zM70 4h1v1h-1zM66 5h1v1h-1zM70 5h1v1h-1zM66 6h1v1h-1zM70 6h1v1h-1zM76 0h1v1h-1zM76 1h1v1h-1zM73 2h4v1h-4zM72 3h1v1h-1zM76 3h1v1h-1zM72 4h1v1h-1zM76 4h1v1h-1zM72 5h1v1h-1zM76 5h1v1h-1zM73 6h4v1h-4zM79 0h3v1h-3zM78 1h1v1h-1zM82 1h1v1h-1zM78 2h1v1h-1zM81 2h2v1h-2zM78 3h1v1h-1zM80 3h1v1h-1zM82 3h1v1h-1zM78 4h2v1h-2zM82 4h1v1h-1zM78 5h1v1h-1zM82 5h1v1h-1zM79 6h3v1h-3zM88 0h1v1h-1zM87 1h1v1h-1zM87 2h1v1h-1zM86 3h1v1h-1zM85 4h1v1h-1zM85 5h1v1h-1zM84 6h1v1h-1zM92 0h1v1h-1zM91 1h2v1h-2zM92 2h1v1h-1zM92 3h1v1h-1zM92 4h1v1h-1zM92 5h1v1h-1zM92 6h1v1h-1z" fill="#000"/></svg>
<svg style="left:59px;top:152px" width="96" height="9" shape-rendering="crispEdges"><path d="M0 0h4v1h-4zM0 1h1v1h-1zM4 1h1v1h-1zM0 2h1v1h-1zM4 2h1v1h-1zM0 3h4v1h-4zM0 4h1v1h-1zM2 4h1v1h-1zM0 5h1v1h-1zM3 5h1v1h-1zM0 6h1v1h-1zM4 6h1v1h-1zM8 0h1v1h-1zM7 1h1v1h-1zM9 1h1v1h-1zM6 2h1v1h-1zM10 2h1v1h-1zM6 3h1v1h-1zM10 3h1v1h-1zM6 4h5v1h-5zM6 5h1v1h-1zM10 5h1v1h-1zM6 6h1v1h-1zM10 6h1v1h-1zM12 0h1v1h-1zM16 0h1v1h-1zM12 1h2v1h-2zM15 1h2v1h-2zM12 2h1v1h-1zM14 2h1v1h-1zM16 2h1v1h-1zM12 3h1v1h-1zM14 3h1v1h-1zM16 3h1v1h-1zM12 4h1v1h-1zM16 4h1v1h-1zM12 5h1v1h-1zM16 5h1v1h-1zM12 6h1v1h-1zM16 6h1v1h-1zM28 0h1v1h-1zM28 1h1v1h-1zM25 2h4v1h-4zM24 3h1v1h-1zM28 3h1v1h-1zM24 4h1v1h-1zM28 4h1v1h-1zM24 5h1v1h-1zM28 5h1v1h-1zM25 6h4v1h-4zM32 0h1v1h-1zM31 2h2v1h-2zM32 3h1v1h-1zM32 4h1v1h-1zM32 5h1v1h-1zM31 6h3v1h-3zM37 2h4v1h-4zM36 3h1v1h-1zM37 4h3v1h-3zM40 5h1v1h-1zM36 6h4v1h-4zM42 0h1v1h-1zM42 1h1v1h-1zM42 2h1v1h-1zM45 2h1v1h-1zM42 3h1v1h-1zM44 3h1v1h-1zM42 4h2v1h-2zM42 5h1v1h-1zM44 5h1v1h-1zM42 6h1v1h-1zM45 6h1v1h-1zM58 0h1v1h-1zM57 1h1v1h-1zM57 2h1v1h-1zM56 3h1v1h-1zM55 4h1v1h-1zM55 5h1v1h-1zM54 6h1v1h-1zM62 0h1v1h-1zM62 1h1v1h-1zM61 2h3v1h-3zM62 3h1v1h-1zM62 4h1v1h-1zM62 5h1v1h-1zM63 6h2v1h-2zM66 2h2v1h-2zM69 2h1v1h-1zM66 3h1v1h-1zM68 3h1v1h-1zM70 3h1v1h-1zM66 4h1v1h-1zM68 4h1v1h-1zM70 4h1v1h-1zM66 5h1v1h-1zM68 5h1v1h-1zM70 5h1v1h-1zM66 6h1v1h-1zM68 6h1v1h-1zM70 6h1v1h-1zM72 2h4v1h-4zM72 3h1v1h-1zM76 3h1v1h-1zM72 4h1v1h-1zM76 4h1v1h-1zM72 5h1v1h-1zM76 5h1v1h-1zM72 6h4v1h-4zM72 7h1v1h-1zM72 8h1v1h-1zM79 0h3v1h-3zM78 1h1v1h-1zM82 1h1v1h-1zM78 2h1v1h-1zM81 2h2v1h-2zM78 3h1v1h-1zM80 3h1v1h-1zM82 3h1v1h-1zM78 4h2v1h-2zM82 4h1v1h-1zM78 5h1v1h-1zM82 5h1v1h-1zM79 6h3v1h-3zM88 0h1v1h-1zM87 1h1v1h-1zM87 2h1v1h-1zM86 3h1v1h-1zM85 4h1v1h-1zM85 5h1v1h-1zM84 6h1v1h-1zM92 0h1v1h-1zM91 1h2v1h-2zM92 2h1v1h-1zM92 3h1v1h-1zM92 4h1v1h-1zM92 5h1v1h-1zM92 6h1v1h-1z" fill="#000"/></svg>
<svg style="left:59px;top:168px" width="78" height="9" shape-rendering="crispEdges"><path d="M1 0h3v1h-3zM0 1h1v1h-1zM4 1h1v1h-1zM0 2h1v1h-1zM0 3h1v1h-1zM0 4h1v1h-1zM0 5h1v1h-1zM4 5h1v1h-1zM1 6h3v1h-3zM6 0h4v1h-4zM6 1h1v1h-1zM10 1h1v1h-1zM6 2h1v1h-1zM10 2h1v1h-1zM6 3h1v1h-1zM10 3h1v1h-1zM6 4h1v1h-1zM10 4h1v1h-1zM6 5h1v1h-1zM10 5h1v1h-1zM6 6h4v1h-4zM12 3h5v1h-5zM18 0h4v1h-4zM18 1h1v1h-1zM22 1h1v1h-1zM18 2h1v1h-1zM22 2h1v1h-1zM18 3h4v1h-4zM18 4h1v1h-1zM20 4h1v1h-1zM18 5h1v1h-1zM21 5h1v1h-1zM18 6h1v1h-1zM22 6h1v1h-1zM25 0h3v1h-3zM24 1h1v1h-1zM28 1h1v1h-1zM24 2h1v1h-1zM28 2h1v1h-1zM24 3h1v1h-1zM28 3h1v1h-1zM24 4h1v1h-1zM28 4h1v1h-1zM24 5h1v1h-1zM28 5h1v1h-1zM25 6h3v1h-3zM30 0h1v1h-1zM34 0h1v1h-1zM30 1h2v1h-2zM33 1h2v1h-2zM30 2h1v1h-1zM32 2h1v1h-1zM34 2h1v1h-1zM30 3h1v1h-1zM32 3h1v1h-1zM34 3h1v1h-1zM30 4h1v1h-1zM34 4h1v1h-1zM30 5h1v1h-1zM34 5h1v1h-1zM30 6h1v1h-1zM34 6h1v1h-1zM46 0h1v1h-1zM45 1h1v1h-1zM45 2h1v1h-1zM44 3h1v1h-1zM43 4h1v1h-1zM43 5h1v1h-1zM42 6h1v1h-1zM49 2h4v1h-4zM48 3h1v1h-1zM48 4h1v1h-1zM48 5h1v1h-1zM49 6h4v1h-4zM58 0h1v1h-1zM58 1h1v1h-1zM55 2h4v1h-4zM54 3h1v1h-1zM58 3h1v1h-1zM54 4h1v1h-1zM58 4h1v1h-1zM54 5h1v1h-1zM58 5h1v1h-1zM55 6h4v1h-4zM61 0h3v1h-3zM60 1h1v1h-1zM64 1h1v1h-1zM64 2h1v1h-1zM63 3h1v1h-1zM62 4h1v1h-1zM61 5h1v1h-1zM60 6h5v1h-5zM70 0h1v1h-1zM69 1h1v1h-1zM69 2h1v1h-1zM68 3h1v1h-1zM67 4h1v1h-1zM67 5h1v1h-1zM66 6h1v1h-1zM74 0h1v1h-1zM73 1h2v1h-2zM74 2h1v1h-1zM74 3h1v1h-1zM74 4h1v1h-1zM74 5h1v1h-1zM74 6h1v1h-1z" fill="#000"/></svg>
<svg style="left:59px;top:217px" width="48" height="9" shape-rendering="crispEdges"><path d="M0 0h1v1h-1zM4 0h1v1h-1zM0 1h2v1h-2zM4 1h1v1h-1zM0 2h1v1h-1zM2 2h1v1h-1zM4 2h1v1h-1zM0 3h1v1h-1zM2 3h1v1h-1zM4 3h1v1h-1zM0 4h1v1h-1zM3 4h2v1h-2zM0 5h1v1h-1zM4 5h1v1h-1zM0 6h1v1h-1zM4 6h1v1h-1zM7 2h3v1h-3zM6 3h1v1h-1zM10 3h1v1h-1zM6 4h5v1h-5zM6 5h1v1h-1zM7 6h3v1h-3zM12 2h1v1h-1zM16 2h1v1h-1zM12 3h1v1h-1zM16 3h1v1h-1zM12 4h1v1h-1zM14 4h1v1h-1zM16 4h1v1h-1zM12 5h1v1h-1zM14 5h1v1h-1zM16 5h1v1h-1zM13 6h1v1h-1zM15 6h1v1h-1zM26 0h2v1h-2zM25 1h1v1h-1zM24 2h4v1h-4zM25 3h1v1h-1zM25 4h1v1h-1zM25 5h1v1h-1zM25 6h1v1h-1zM32 0h1v1h-1zM31 2h2v1h-2zM32 3h1v1h-1zM32 4h1v1h-1zM32 5h1v1h-1zM31 6h3v1h-3zM37 0h2v1h-2zM38 1h1v1h-1zM38 2h1v1h-1zM38 3h1v1h-1zM38 4h1v1h-1zM38 5h1v1h-1zM37 6h3v1h-3zM43 2h3v1h-3zM42 3h1v1h-1zM46 3h1v1h-1zM42 4h5v1h-5zM42 5h1v1h-1zM43 6h3v1h-3z" fill="#000"/></svg>
<svg style="left:172px;top:217px" width="12" height="9" shape-rendering="crispEdges"><path d="M0 0h5v1h-5zM0 1h1v1h-1zM0 2h1v1h-1zM0 3h4v1h-4zM0 4h1v1h-1zM0 5h1v1h-1zM0 6h1v1h-1zM6 0h5v1h-5zM10 1h1v1h-1zM9 2h1v1h-1zM8 3h1v1h-1zM7 4h1v1h-1zM7 5h1v1h-1zM7 6h1v1h-1z" fill="#7a7a7a"/></svg>
<svg style="left:59px;top:233px" width="60" height="9" shape-rendering="crispEdges"><path d="M0 0h1v1h-1zM4 0h1v1h-1zM0 1h2v1h-2zM4 1h1v1h-1zM0 2h1v1h-1zM2 2h1v1h-1zM4 2h1v1h-1zM0 3h1v1h-1zM2 3h1v1h-1zM4 3h1v1h-1zM0 4h1v1h-1zM3 4h2v1h-2zM0 5h1v1h-1zM4 5h1v1h-1zM0 6h1v1h-1zM4 6h1v1h-1zM7 2h3v1h-3zM6 3h1v1h-1zM10 3h1v1h-1zM6 4h5v1h-5zM6 5h1v1h-1zM7 6h3v1h-3zM12 2h1v1h-1zM16 2h1v1h-1zM12 3h1v1h-1zM16 3h1v1h-1zM12 4h1v1h-1zM14 4h1v1h-1zM16 4h1v1h-1zM12 5h1v1h-1zM14 5h1v1h-1zM16 5h1v1h-1zM13 6h1v1h-1zM15 6h1v1h-1zM26 0h2v1h-2zM25 1h1v1h-1zM24 2h4v1h-4zM25 3h1v1h-1zM25 4h1v1h-1zM25 5h1v1h-1zM25 6h1v1h-1zM31 2h3v1h-3zM30 3h1v1h-1zM34 3h1v1h-1zM30 4h1v1h-1zM34 4h1v1h-1zM30 5h1v1h-1zM34 5h1v1h-1zM31 6h3v1h-3zM37 0h2v1h-2zM38 1h1v1h-1zM38 2h1v1h-1zM38 3h1v1h-1zM38 4h1v1h-1zM38 5h1v1h-1zM37 6h3v1h-3zM46 0h1v1h-1zM46 1h1v1h-1zM43 2h4v1h-4zM42 3h1v1h-1zM46 3h1v1h-1zM42 4h1v1h-1zM46 4h1v1h-1zM42 5h1v1h-1zM46 5h1v1h-1zM43 6h4v1h-4zM49 2h3v1h-3zM48 3h1v1h-1zM52 3h1v1h-1zM48 4h5v1h-5zM48 5h1v1h-1zM49 6h3v1h-3zM55 2h4v1h-4zM55 3h1v1h-1zM55 4h1v1h-1zM55 5h1v1h-1zM55 6h1v1h-1z" fill="#000"/></svg>
<svg style="left:172px;top:233px" width="12" height="9" shape-rendering="crispEdges"><path d="M0 0h5v1h-5zM0 1h1v1h-1zM0 2h1v1h-1zM0 3h4v1h-4zM0 4h1v1h-1zM0 5h1v1h-1zM0 6h1v1h-1zM7 0h3v1h-3zM6 1h1v1h-1zM6 2h1v1h-1zM6 3h4v1h-4zM6 4h1v1h-1zM10 4h1v1h-1zM6 5h1v1h-1zM10 5h1v1h-1zM7 6h3v1h-3z" fill="#7a7a7a"/></svg>
<svg style="left:59px;top:249px" width="48" height="9" shape-rendering="crispEdges"><path d="M1 0h3v1h-3zM0 1h1v1h-1zM4 1h1v1h-1zM0 2h1v1h-1zM1 3h3v1h-3zM4 4h1v1h-1zM0 5h1v1h-1zM4 5h1v1h-1zM1 6h3v1h-3zM7 2h3v1h-3zM6 3h1v1h-1zM10 3h1v1h-1zM6 4h5v1h-5zM6 5h1v1h-1zM7 6h3v1h-3zM14 0h1v1h-1zM14 1h1v1h-1zM13 2h3v1h-3zM14 3h1v1h-1zM14 4h1v1h-1zM14 5h1v1h-1zM15 6h2v1h-2zM20 0h1v1h-1zM20 1h1v1h-1zM19 2h3v1h-3zM20 3h1v1h-1zM20 4h1v1h-1zM20 5h1v1h-1zM21 6h2v1h-2zM26 0h1v1h-1zM25 2h2v1h-2zM26 3h1v1h-1zM26 4h1v1h-1zM26 5h1v1h-1zM25 6h3v1h-3zM30 2h4v1h-4zM30 3h1v1h-1zM34 3h1v1h-1zM30 4h1v1h-1zM34 4h1v1h-1zM30 5h1v1h-1zM34 5h1v1h-1zM30 6h1v1h-1zM34 6h1v1h-1zM37 2h4v1h-4zM36 3h1v1h-1zM40 3h1v1h-1zM36 4h1v1h-1zM40 4h1v1h-1zM36 5h1v1h-1zM40 5h1v1h-1zM37 6h4v1h-4zM40 7h1v1h-1zM37 8h3v1h-3zM43 2h4v1h-4zM42 3h1v1h-1zM43 4h3v1h-3zM46 5h1v1h-1zM42 6h4v1h-4z" fill="#000"/></svg>
<svg style="left:166px;top:249px" width="18" height="9" shape-rendering="crispEdges"><path d="M0 0h5v1h-5zM0 1h1v1h-1zM0 2h1v1h-1zM0 3h4v1h-4zM0 4h1v1h-1zM0 5h1v1h-1zM0 6h1v1h-1zM8 0h1v1h-1zM7 1h2v1h-2zM8 2h1v1h-1zM8 3h1v1h-1zM8 4h1v1h-1zM8 5h1v1h-1zM8 6h1v1h-1zM13 0h3v1h-3zM12 1h1v1h-1zM16 1h1v1h-1zM12 2h1v1h-1zM15 2h2v1h-2zM12 3h1v1h-1zM14 3h1v1h-1zM16 3h1v1h-1zM12 4h2v1h-2zM16 4h1v1h-1zM12 5h1v1h-1zM16 5h1v1h-1zM13 6h3v1h-3z" fill="#7a7a7a"/></svg>
<div style="left:39px;top:102.5px;width:10px;height:10px;transform:rotate(45deg);background:radial-gradient(circle at 50% 50%, rgba(255,235,225,0.85) 0%, rgba(255,235,225,0.35) 35%, rgba(255,255,255,0) 65%), conic-gradient(from -45deg, #f03030, #f8a020 25%, #1870f0 50%, #20b030 75%, #f03030 100%)"></div>
<svg style="left:37px;top:117px" width="14" height="13" viewBox="0 0 14 13"><path d="M0.5 2L2 0.5H13.5V12.5H0.5Z" fill="#8aa0d0" stroke="#4a5a88"/>
<rect x="4" y="0.5" width="6.5" height="4.5" fill="#c8d4f0" stroke="#4a5a88" stroke-width="0.7"/><rect x="7.5" y="1.3" width="1.5" height="2.7" fill="#4a5a88"/>
<rect x="2.5" y="6.5" width="9" height="6" fill="#fff"/><path d="M2.5 8.5H11.5M2.5 10.8H11.5" stroke="#e05070" stroke-width="1.1"/></svg>
<svg style="left:37px;top:133px" width="15" height="11" viewBox="0 0 15 11"><path d="M2.5 0.5H12L14.5 3.5V10.5H0.5V3.5Z" fill="#ebe8f2" stroke="#4a6a90"/><path d="M0.5 3.5H14.5" stroke="#4a6a90"/><rect x="10" y="6" width="2" height="2" fill="#50a020"/></svg>
<svg style="left:37px;top:152px" width="14" height="8" viewBox="0 0 14 8"><rect x="0.5" y="0.5" width="12.5" height="5" fill="#e4e4e4" stroke="#4a4a4a"/><path d="M1.5 5.5V8M3.5 5.5V8M5.5 5.5V8M7.5 5.5V8M9.5 5.5V8M11.5 5.5V8" stroke="#4a4a4a"/></svg>
<svg style="left:37px;top:165px" width="14" height="14" viewBox="0 0 14 14"><defs><radialGradient id="cdg"><stop offset="0" stop-color="#f4f4f4"/><stop offset="0.7" stop-color="#d4d4d8"/><stop offset="1" stop-color="#a8a8b0"/></radialGradient></defs><circle cx="7.5" cy="6.8" r="6.2" fill="url(#cdg)" stroke="#7a7a82" stroke-width="0.9"/><path d="M7.5 6.8L12.5 3.2A6 6 0 0 1 13.5 6Z" fill="#f0d040"/><path d="M7.5 6.8L2.5 10.4A6 6 0 0 1 1.5 7.6Z" fill="#f0c040"/><path d="M7.5 6.8L3 3A6 6 0 0 1 5 1.2Z" fill="#90c8f0" opacity="0.8"/><path d="M7.5 6.8L10 12.6A6 6 0 0 1 8 13Z" fill="#f09050"/><circle cx="7.5" cy="6.8" r="2" fill="#f8f8f8" stroke="#707070" stroke-width="0.8"/></svg>
<svg style="left:38px;top:215px" width="14" height="14" viewBox="0 0 14 14"><rect x="1.5" y="1.5" width="9" height="11.5" fill="url(#docg)" stroke="#7a80a8"/><circle cx="9.5" cy="3.5" r="3.3" fill="#30b030" stroke="#1a8a1a" stroke-width="0.7"/><rect x="9" y="1.5" width="1.2" height="4" fill="#fff"/><rect x="7.5" y="2.9" width="4" height="1.2" fill="#fff"/></svg>
<svg style="left:37px;top:230px" width="15" height="14" viewBox="0 0 15 14"><path d="M1.5 2.5H5.5L6.5 4H13.5V12.5H1.5Z" fill="url(#fold)" stroke="#c09020"/><path d="M1.5 6.5H13.5" stroke="#d8a830" stroke-width="0.7"/><circle cx="10.5" cy="4.5" r="3.3" fill="#30b030" stroke="#1a8a1a" stroke-width="0.7"/><rect x="10" y="2.5" width="1.2" height="4" fill="#fff"/><rect x="8.5" y="3.9" width="4" height="1.2" fill="#fff"/></svg>
<svg style="left:36px;top:246px" width="16" height="14" viewBox="0 0 16 14"><polygon points="8.62,9.07 6.97,10.22 6.04,12.00 4.22,11.14 2.22,11.22 2.05,9.22 0.98,7.53 2.63,6.38 3.56,4.60 5.38,5.46 7.38,5.38 7.55,7.38" fill="#e8b030" stroke="#7a4a08" stroke-width="0.9" stroke-linejoin="round"/><circle cx="4.8" cy="8.3" r="1" fill="#5a4a40"/><polygon points="14.92,5.37 13.27,6.52 12.34,8.30 10.52,7.44 8.52,7.52 8.35,5.52 7.28,3.83 8.93,2.68 9.86,0.90 11.68,1.76 13.68,1.68 13.85,3.68" fill="#e8b030" stroke="#7a4a08" stroke-width="0.9" stroke-linejoin="round"/><circle cx="11.1" cy="4.6" r="1" fill="#5a4a40"/></svg>
<div style="left:206px;top:65px;width:348px;height:433px;background:#fff"></div>
<div style="left:16px;top:498px;width:538px;height:1px;background:#a4acc4"></div>
<div style="left:206px;top:498px;width:348px;height:1px;background:#8c98b8"></div>
<div style="left:207px;top:65px;width:346px;height:17px;background:linear-gradient(#e9e7e7,#d7d5d5)"></div>
<div style="left:207px;top:65px;width:346px;height:1px;background:#8c98b8"></div>
<div style="left:207px;top:66px;width:346px;height:1px;background:#fbfbfb"></div>
<div style="left:207px;top:81px;width:346px;height:1px;background:#8c98b8"></div>
<div style="left:396px;top:65px;width:1px;height:17px;background:#8c98b8"></div>
<div style="left:397px;top:66px;width:1px;height:15px;background:#fbfbfb"></div>
<div style="left:469px;top:65px;width:1px;height:17px;background:#8c98b8"></div>
<div style="left:470px;top:66px;width:1px;height:15px;background:#fbfbfb"></div>
<div style="left:537px;top:65px;width:1px;height:17px;background:#8c98b8"></div>
<div style="left:538px;top:66px;width:1px;height:15px;background:#fbfbfb"></div>
<div style="left:207px;top:66px;width:1px;height:15px;background:#fbfbfb"></div>
<div style="left:553px;top:65px;width:1px;height:433px;background:#8c98b8"></div>
<svg style="left:290px;top:70px" width="24" height="9" shape-rendering="crispEdges"><path d="M0 0h5v1h-5zM0 1h1v1h-1zM0 2h1v1h-1zM0 3h4v1h-4zM0 4h1v1h-1zM0 5h1v1h-1zM0 6h1v1h-1zM8 0h1v1h-1zM7 2h2v1h-2zM8 3h1v1h-1zM8 4h1v1h-1zM8 5h1v1h-1zM7 6h3v1h-3zM13 0h2v1h-2zM14 1h1v1h-1zM14 2h1v1h-1zM14 3h1v1h-1zM14 4h1v1h-1zM14 5h1v1h-1zM13 6h3v1h-3zM19 2h3v1h-3zM18 3h1v1h-1zM22 3h1v1h-1zM18 4h5v1h-5zM18 5h1v1h-1zM19 6h3v1h-3z" fill="#000"/></svg>
<svg style="left:421px;top:70px" width="24" height="9" shape-rendering="crispEdges"><path d="M0 0h5v1h-5zM2 1h1v1h-1zM2 2h1v1h-1zM2 3h1v1h-1zM2 4h1v1h-1zM2 5h1v1h-1zM2 6h1v1h-1zM6 2h1v1h-1zM10 2h1v1h-1zM6 3h1v1h-1zM10 3h1v1h-1zM6 4h1v1h-1zM10 4h1v1h-1zM6 5h1v1h-1zM10 5h1v1h-1zM7 6h4v1h-4zM10 7h1v1h-1zM7 8h3v1h-3zM12 2h4v1h-4zM12 3h1v1h-1zM16 3h1v1h-1zM12 4h1v1h-1zM16 4h1v1h-1zM12 5h1v1h-1zM16 5h1v1h-1zM12 6h4v1h-4zM12 7h1v1h-1zM12 8h1v1h-1zM19 2h3v1h-3zM18 3h1v1h-1zM22 3h1v1h-1zM18 4h5v1h-5zM18 5h1v1h-1zM19 6h3v1h-3z" fill="#000"/></svg>
<svg style="left:449px;top:70px" width="6" height="9" shape-rendering="crispEdges"><path d="M2 0h1v1h-1zM2 1h1v1h-1zM2 2h1v1h-1zM2 3h1v1h-1zM0 4h1v1h-1zM2 4h1v1h-1zM4 4h1v1h-1zM1 5h3v1h-3zM2 6h1v1h-1z" fill="#8a9ac0"/></svg>
<svg style="left:492px;top:70px" width="24" height="9" shape-rendering="crispEdges"><path d="M1 0h3v1h-3zM0 1h1v1h-1zM4 1h1v1h-1zM0 2h1v1h-1zM1 3h3v1h-3zM4 4h1v1h-1zM0 5h1v1h-1zM4 5h1v1h-1zM1 6h3v1h-3zM8 0h1v1h-1zM7 2h2v1h-2zM8 3h1v1h-1zM8 4h1v1h-1zM8 5h1v1h-1zM7 6h3v1h-3zM12 2h5v1h-5zM15 3h1v1h-1zM14 4h1v1h-1zM13 5h1v1h-1zM12 6h5v1h-5zM19 2h3v1h-3zM18 3h1v1h-1zM22 3h1v1h-1zM18 4h5v1h-5zM18 5h1v1h-1zM19 6h3v1h-3z" fill="#000"/></svg>
<svg style="left:543px;top:70px" width="6" height="9" shape-rendering="crispEdges"><path d="M2 0h1v1h-1zM1 1h3v1h-3zM0 2h1v1h-1zM2 2h1v1h-1zM4 2h1v1h-1zM2 3h1v1h-1zM2 4h1v1h-1zM2 5h1v1h-1zM2 6h1v1h-1z" fill="#000"/></svg>
<div style="left:396px;top:82px;width:1px;height:416px;background:#e2e2e2"></div>
<div style="left:469px;top:82px;width:1px;height:416px;background:#e2e2e2"></div>
<div style="left:537px;top:82px;width:1px;height:416px;background:#8c98b8"></div>
<div style="left:538px;top:82px;width:15px;height:283px;background:#cfd1d1"></div>
<div style="left:538px;top:364px;width:15px;height:1px;background:#8c98b8"></div>
<div style="left:538px;top:365px;width:15px;height:116px;background:linear-gradient(to right,#e6e2e2,#d6d4d4);border-top:1px solid #fafafa;border-left:1px solid #fafafa"></div>
<div style="left:538px;top:481px;width:15px;height:2px;background:#8c98b8"></div>
<div style="left:538px;top:483px;width:15px;height:15px;background:linear-gradient(#e9e7e7,#d7d5d5);border-left:1px solid #fafafa;border-top:1px solid #fafafa"></div>
<svg style="left:543px;top:487px" width="6" height="9" shape-rendering="crispEdges"><path d="M2 0h1v1h-1zM2 1h1v1h-1zM2 2h1v1h-1zM2 3h1v1h-1zM0 4h1v1h-1zM2 4h1v1h-1zM4 4h1v1h-1zM1 5h3v1h-3zM2 6h1v1h-1z" fill="#000"/></svg>
<div style="left:207px;top:388px;width:330px;height:18px;background:#98b2d4"></div>
<svg style="left:229px;top:87px" width="72" height="9" shape-rendering="crispEdges"><path d="M1 0h3v1h-3zM0 1h1v1h-1zM4 1h1v1h-1zM0 2h1v1h-1zM1 3h3v1h-3zM4 4h1v1h-1zM0 5h1v1h-1zM4 5h1v1h-1zM1 6h3v1h-3zM6 2h1v1h-1zM10 2h1v1h-1zM6 3h1v1h-1zM10 3h1v1h-1zM6 4h1v1h-1zM10 4h1v1h-1zM6 5h1v1h-1zM10 5h1v1h-1zM7 6h4v1h-4zM10 7h1v1h-1zM7 8h3v1h-3zM13 2h4v1h-4zM12 3h1v1h-1zM13 4h3v1h-3zM16 5h1v1h-1zM12 6h4v1h-4zM20 0h1v1h-1zM20 1h1v1h-1zM19 2h3v1h-3zM20 3h1v1h-1zM20 4h1v1h-1zM20 5h1v1h-1zM21 6h2v1h-2zM25 2h3v1h-3zM24 3h1v1h-1zM28 3h1v1h-1zM24 4h5v1h-5zM24 5h1v1h-1zM25 6h3v1h-3zM30 2h2v1h-2zM33 2h1v1h-1zM30 3h1v1h-1zM32 3h1v1h-1zM34 3h1v1h-1zM30 4h1v1h-1zM32 4h1v1h-1zM34 4h1v1h-1zM30 5h1v1h-1zM32 5h1v1h-1zM34 5h1v1h-1zM30 6h1v1h-1zM32 6h1v1h-1zM34 6h1v1h-1zM36 7h5v1h-5zM42 2h4v1h-4zM42 3h1v1h-1zM46 3h1v1h-1zM42 4h1v1h-1zM46 4h1v1h-1zM42 5h1v1h-1zM46 5h1v1h-1zM42 6h4v1h-4zM42 7h1v1h-1zM42 8h1v1h-1zM49 2h3v1h-3zM52 3h1v1h-1zM49 4h4v1h-4zM48 5h1v1h-1zM52 5h1v1h-1zM49 6h4v1h-4zM54 2h4v1h-4zM54 3h1v1h-1zM58 3h1v1h-1zM54 4h1v1h-1zM58 4h1v1h-1zM54 5h1v1h-1zM58 5h1v1h-1zM54 6h1v1h-1zM58 6h1v1h-1zM61 2h3v1h-3zM60 3h1v1h-1zM64 3h1v1h-1zM60 4h5v1h-5zM60 5h1v1h-1zM61 6h3v1h-3zM67 0h2v1h-2zM68 1h1v1h-1zM68 2h1v1h-1zM68 3h1v1h-1zM68 4h1v1h-1zM68 5h1v1h-1zM67 6h3v1h-3z" fill="#000"/></svg>
<svg style="left:497px;top:88px" width="24" height="9" shape-rendering="crispEdges"><path d="M1 0h3v1h-3zM0 1h1v1h-1zM4 1h1v1h-1zM4 2h1v1h-1zM3 3h1v1h-1zM2 4h1v1h-1zM1 5h1v1h-1zM0 6h5v1h-5zM12 0h1v1h-1zM16 0h1v1h-1zM12 1h1v1h-1zM15 1h1v1h-1zM12 2h1v1h-1zM14 2h1v1h-1zM12 3h2v1h-2zM12 4h1v1h-1zM14 4h1v1h-1zM12 5h1v1h-1zM15 5h1v1h-1zM12 6h1v1h-1zM16 6h1v1h-1zM18 0h1v1h-1zM18 1h1v1h-1zM18 2h4v1h-4zM18 3h1v1h-1zM22 3h1v1h-1zM18 4h1v1h-1zM22 4h1v1h-1zM18 5h1v1h-1zM22 5h1v1h-1zM18 6h4v1h-4z" fill="#000"/></svg>
<svg style="left:229px;top:105px" width="30" height="9" shape-rendering="crispEdges"><path d="M0 0h5v1h-5zM2 1h1v1h-1zM2 2h1v1h-1zM2 3h1v1h-1zM2 4h1v1h-1zM2 5h1v1h-1zM2 6h1v1h-1zM7 2h3v1h-3zM10 3h1v1h-1zM7 4h4v1h-4zM6 5h1v1h-1zM10 5h1v1h-1zM7 6h4v1h-4zM12 0h1v1h-1zM12 1h1v1h-1zM12 2h4v1h-4zM12 3h1v1h-1zM16 3h1v1h-1zM12 4h1v1h-1zM16 4h1v1h-1zM12 5h1v1h-1zM16 5h1v1h-1zM12 6h4v1h-4zM19 0h2v1h-2zM20 1h1v1h-1zM20 2h1v1h-1zM20 3h1v1h-1zM20 4h1v1h-1zM20 5h1v1h-1zM19 6h3v1h-3zM25 2h3v1h-3zM24 3h1v1h-1zM28 3h1v1h-1zM24 4h5v1h-5zM24 5h1v1h-1zM25 6h3v1h-3z" fill="#000"/></svg>
<svg style="left:491px;top:106px" width="30" height="9" shape-rendering="crispEdges"><path d="M2 0h1v1h-1zM1 1h2v1h-2zM2 2h1v1h-1zM2 3h1v1h-1zM2 4h1v1h-1zM2 5h1v1h-1zM2 6h1v1h-1zM7 0h3v1h-3zM6 1h1v1h-1zM10 1h1v1h-1zM10 2h1v1h-1zM9 3h1v1h-1zM8 4h1v1h-1zM7 5h1v1h-1zM6 6h5v1h-5zM18 0h1v1h-1zM22 0h1v1h-1zM18 1h1v1h-1zM21 1h1v1h-1zM18 2h1v1h-1zM20 2h1v1h-1zM18 3h2v1h-2zM18 4h1v1h-1zM20 4h1v1h-1zM18 5h1v1h-1zM21 5h1v1h-1zM18 6h1v1h-1zM22 6h1v1h-1zM24 0h1v1h-1zM24 1h1v1h-1zM24 2h4v1h-4zM24 3h1v1h-1zM28 3h1v1h-1zM24 4h1v1h-1zM28 4h1v1h-1zM24 5h1v1h-1zM28 5h1v1h-1zM24 6h4v1h-4z" fill="#000"/></svg>
<svg style="left:229px;top:123px" width="48" height="9" shape-rendering="crispEdges"><path d="M0 0h5v1h-5zM2 1h1v1h-1zM2 2h1v1h-1zM2 3h1v1h-1zM2 4h1v1h-1zM2 5h1v1h-1zM2 6h1v1h-1zM7 2h3v1h-3zM6 3h1v1h-1zM10 3h1v1h-1zM6 4h5v1h-5zM6 5h1v1h-1zM7 6h3v1h-3zM13 2h4v1h-4zM13 3h1v1h-1zM13 4h1v1h-1zM13 5h1v1h-1zM13 6h1v1h-1zM18 2h2v1h-2zM21 2h1v1h-1zM18 3h1v1h-1zM20 3h1v1h-1zM22 3h1v1h-1zM18 4h1v1h-1zM20 4h1v1h-1zM22 4h1v1h-1zM18 5h1v1h-1zM20 5h1v1h-1zM22 5h1v1h-1zM18 6h1v1h-1zM20 6h1v1h-1zM22 6h1v1h-1zM26 0h1v1h-1zM25 2h2v1h-2zM26 3h1v1h-1zM26 4h1v1h-1zM26 5h1v1h-1zM25 6h3v1h-3zM30 2h4v1h-4zM30 3h1v1h-1zM34 3h1v1h-1zM30 4h1v1h-1zM34 4h1v1h-1zM30 5h1v1h-1zM34 5h1v1h-1zM30 6h1v1h-1zM34 6h1v1h-1zM37 2h3v1h-3zM40 3h1v1h-1zM37 4h4v1h-4zM36 5h1v1h-1zM40 5h1v1h-1zM37 6h4v1h-4zM43 0h2v1h-2zM44 1h1v1h-1zM44 2h1v1h-1zM44 3h1v1h-1zM44 4h1v1h-1zM44 5h1v1h-1zM43 6h3v1h-3z" fill="#000"/></svg>
<svg style="left:497px;top:124px" width="24" height="9" shape-rendering="crispEdges"><path d="M2 0h1v1h-1zM1 1h2v1h-2zM2 2h1v1h-1zM2 3h1v1h-1zM2 4h1v1h-1zM2 5h1v1h-1zM2 6h1v1h-1zM12 0h1v1h-1zM16 0h1v1h-1zM12 1h1v1h-1zM15 1h1v1h-1zM12 2h1v1h-1zM14 2h1v1h-1zM12 3h2v1h-2zM12 4h1v1h-1zM14 4h1v1h-1zM12 5h1v1h-1zM15 5h1v1h-1zM12 6h1v1h-1zM16 6h1v1h-1zM18 0h1v1h-1zM18 1h1v1h-1zM18 2h4v1h-4zM18 3h1v1h-1zM22 3h1v1h-1zM18 4h1v1h-1zM22 4h1v1h-1zM18 5h1v1h-1zM22 5h1v1h-1zM18 6h4v1h-4z" fill="#000"/></svg>
<svg style="left:229px;top:141px" width="24" height="9" shape-rendering="crispEdges"><path d="M0 0h5v1h-5zM2 1h1v1h-1zM2 2h1v1h-1zM2 3h1v1h-1zM2 4h1v1h-1zM2 5h1v1h-1zM2 6h1v1h-1zM7 2h3v1h-3zM6 3h1v1h-1zM10 3h1v1h-1zM6 4h5v1h-5zM6 5h1v1h-1zM7 6h3v1h-3zM13 2h4v1h-4zM12 3h1v1h-1zM13 4h3v1h-3zM16 5h1v1h-1zM12 6h4v1h-4zM20 0h1v1h-1zM20 1h1v1h-1zM19 2h3v1h-3zM20 3h1v1h-1zM20 4h1v1h-1zM20 5h1v1h-1zM21 6h2v1h-2z" fill="#000"/></svg>
<svg style="left:485px;top:142px" width="36" height="9" shape-rendering="crispEdges"><path d="M3 0h1v1h-1zM2 1h2v1h-2zM1 2h1v1h-1zM3 2h1v1h-1zM0 3h1v1h-1zM3 3h1v1h-1zM0 4h5v1h-5zM3 5h1v1h-1zM3 6h1v1h-1zM7 0h3v1h-3zM6 1h1v1h-1zM10 1h1v1h-1zM10 2h1v1h-1zM9 3h1v1h-1zM8 4h1v1h-1zM7 5h1v1h-1zM6 6h5v1h-5zM13 0h3v1h-3zM12 1h1v1h-1zM12 2h1v1h-1zM12 3h4v1h-4zM12 4h1v1h-1zM16 4h1v1h-1zM12 5h1v1h-1zM16 5h1v1h-1zM13 6h3v1h-3zM24 0h1v1h-1zM24 1h1v1h-1zM24 2h4v1h-4zM24 3h1v1h-1zM28 3h1v1h-1zM24 4h1v1h-1zM28 4h1v1h-1zM24 5h1v1h-1zM28 5h1v1h-1zM24 6h4v1h-4z" fill="#000"/></svg>
<svg style="left:229px;top:159px" width="30" height="9" shape-rendering="crispEdges"><path d="M0 0h5v1h-5zM2 1h1v1h-1zM2 2h1v1h-1zM2 3h1v1h-1zM2 4h1v1h-1zM2 5h1v1h-1zM2 6h1v1h-1zM8 0h1v1h-1zM7 2h2v1h-2zM8 3h1v1h-1zM8 4h1v1h-1zM8 5h1v1h-1zM7 6h3v1h-3zM12 2h4v1h-4zM12 3h1v1h-1zM16 3h1v1h-1zM12 4h1v1h-1zM16 4h1v1h-1zM12 5h1v1h-1zM16 5h1v1h-1zM12 6h1v1h-1zM16 6h1v1h-1zM20 0h2v1h-2zM19 1h1v1h-1zM18 2h4v1h-4zM19 3h1v1h-1zM19 4h1v1h-1zM19 5h1v1h-1zM19 6h1v1h-1zM25 2h3v1h-3zM24 3h1v1h-1zM28 3h1v1h-1zM24 4h1v1h-1zM28 4h1v1h-1zM24 5h1v1h-1zM28 5h1v1h-1zM25 6h3v1h-3z" fill="#000"/></svg>
<svg style="left:497px;top:160px" width="24" height="9" shape-rendering="crispEdges"><path d="M2 0h1v1h-1zM1 1h2v1h-2zM2 2h1v1h-1zM2 3h1v1h-1zM2 4h1v1h-1zM2 5h1v1h-1zM2 6h1v1h-1zM12 0h1v1h-1zM16 0h1v1h-1zM12 1h1v1h-1zM15 1h1v1h-1zM12 2h1v1h-1zM14 2h1v1h-1zM12 3h2v1h-2zM12 4h1v1h-1zM14 4h1v1h-1zM12 5h1v1h-1zM15 5h1v1h-1zM12 6h1v1h-1zM16 6h1v1h-1zM18 0h1v1h-1zM18 1h1v1h-1zM18 2h4v1h-4zM18 3h1v1h-1zM22 3h1v1h-1zM18 4h1v1h-1zM22 4h1v1h-1zM18 5h1v1h-1zM22 5h1v1h-1zM18 6h4v1h-4z" fill="#000"/></svg>
<svg style="left:497px;top:178px" width="24" height="9" shape-rendering="crispEdges"><path d="M2 0h1v1h-1zM1 1h2v1h-2zM2 2h1v1h-1zM2 3h1v1h-1zM2 4h1v1h-1zM2 5h1v1h-1zM2 6h1v1h-1zM12 0h1v1h-1zM16 0h1v1h-1zM12 1h1v1h-1zM15 1h1v1h-1zM12 2h1v1h-1zM14 2h1v1h-1zM12 3h2v1h-2zM12 4h1v1h-1zM14 4h1v1h-1zM12 5h1v1h-1zM15 5h1v1h-1zM12 6h1v1h-1zM16 6h1v1h-1zM18 0h1v1h-1zM18 1h1v1h-1zM18 2h4v1h-4zM18 3h1v1h-1zM22 3h1v1h-1zM18 4h1v1h-1zM22 4h1v1h-1zM18 5h1v1h-1zM22 5h1v1h-1zM18 6h4v1h-4z" fill="#000"/></svg>
<svg style="left:497px;top:196px" width="24" height="9" shape-rendering="crispEdges"><path d="M2 0h1v1h-1zM1 1h2v1h-2zM2 2h1v1h-1zM2 3h1v1h-1zM2 4h1v1h-1zM2 5h1v1h-1zM2 6h1v1h-1zM12 0h1v1h-1zM16 0h1v1h-1zM12 1h1v1h-1zM15 1h1v1h-1zM12 2h1v1h-1zM14 2h1v1h-1zM12 3h2v1h-2zM12 4h1v1h-1zM14 4h1v1h-1zM12 5h1v1h-1zM15 5h1v1h-1zM12 6h1v1h-1zM16 6h1v1h-1zM18 0h1v1h-1zM18 1h1v1h-1zM18 2h4v1h-4zM18 3h1v1h-1zM22 3h1v1h-1zM18 4h1v1h-1zM22 4h1v1h-1zM18 5h1v1h-1zM22 5h1v1h-1zM18 6h4v1h-4z" fill="#000"/></svg>
<svg style="left:497px;top:214px" width="24" height="9" shape-rendering="crispEdges"><path d="M2 0h1v1h-1zM1 1h2v1h-2zM2 2h1v1h-1zM2 3h1v1h-1zM2 4h1v1h-1zM2 5h1v1h-1zM2 6h1v1h-1zM12 0h1v1h-1zM16 0h1v1h-1zM12 1h1v1h-1zM15 1h1v1h-1zM12 2h1v1h-1zM14 2h1v1h-1zM12 3h2v1h-2zM12 4h1v1h-1zM14 4h1v1h-1zM12 5h1v1h-1zM15 5h1v1h-1zM12 6h1v1h-1zM16 6h1v1h-1zM18 0h1v1h-1zM18 1h1v1h-1zM18 2h4v1h-4zM18 3h1v1h-1zM22 3h1v1h-1zM18 4h1v1h-1zM22 4h1v1h-1zM18 5h1v1h-1zM22 5h1v1h-1zM18 6h4v1h-4z" fill="#000"/></svg>
<svg style="left:497px;top:232px" width="24" height="9" shape-rendering="crispEdges"><path d="M2 0h1v1h-1zM1 1h2v1h-2zM2 2h1v1h-1zM2 3h1v1h-1zM2 4h1v1h-1zM2 5h1v1h-1zM2 6h1v1h-1zM12 0h1v1h-1zM16 0h1v1h-1zM12 1h1v1h-1zM15 1h1v1h-1zM12 2h1v1h-1zM14 2h1v1h-1zM12 3h2v1h-2zM12 4h1v1h-1zM14 4h1v1h-1zM12 5h1v1h-1zM15 5h1v1h-1zM12 6h1v1h-1zM16 6h1v1h-1zM18 0h1v1h-1zM18 1h1v1h-1zM18 2h4v1h-4zM18 3h1v1h-1zM22 3h1v1h-1zM18 4h1v1h-1zM22 4h1v1h-1zM18 5h1v1h-1zM22 5h1v1h-1zM18 6h4v1h-4z" fill="#000"/></svg>
<svg style="left:497px;top:250px" width="24" height="9" shape-rendering="crispEdges"><path d="M2 0h1v1h-1zM1 1h2v1h-2zM2 2h1v1h-1zM2 3h1v1h-1zM2 4h1v1h-1zM2 5h1v1h-1zM2 6h1v1h-1zM12 0h1v1h-1zM16 0h1v1h-1zM12 1h1v1h-1zM15 1h1v1h-1zM12 2h1v1h-1zM14 2h1v1h-1zM12 3h2v1h-2zM12 4h1v1h-1zM14 4h1v1h-1zM12 5h1v1h-1zM15 5h1v1h-1zM12 6h1v1h-1zM16 6h1v1h-1zM18 0h1v1h-1zM18 1h1v1h-1zM18 2h4v1h-4zM18 3h1v1h-1zM22 3h1v1h-1zM18 4h1v1h-1zM22 4h1v1h-1zM18 5h1v1h-1zM22 5h1v1h-1zM18 6h4v1h-4z" fill="#000"/></svg>
<svg style="left:497px;top:268px" width="24" height="9" shape-rendering="crispEdges"><path d="M2 0h1v1h-1zM1 1h2v1h-2zM2 2h1v1h-1zM2 3h1v1h-1zM2 4h1v1h-1zM2 5h1v1h-1zM2 6h1v1h-1zM12 0h1v1h-1zM16 0h1v1h-1zM12 1h1v1h-1zM15 1h1v1h-1zM12 2h1v1h-1zM14 2h1v1h-1zM12 3h2v1h-2zM12 4h1v1h-1zM14 4h1v1h-1zM12 5h1v1h-1zM15 5h1v1h-1zM12 6h1v1h-1zM16 6h1v1h-1zM18 0h1v1h-1zM18 1h1v1h-1zM18 2h4v1h-4zM18 3h1v1h-1zM22 3h1v1h-1zM18 4h1v1h-1zM22 4h1v1h-1zM18 5h1v1h-1zM22 5h1v1h-1zM18 6h4v1h-4z" fill="#000"/></svg>
<svg style="left:497px;top:340px" width="24" height="9" shape-rendering="crispEdges"><path d="M2 0h1v1h-1zM1 1h2v1h-2zM2 2h1v1h-1zM2 3h1v1h-1zM2 4h1v1h-1zM2 5h1v1h-1zM2 6h1v1h-1zM12 0h1v1h-1zM16 0h1v1h-1zM12 1h1v1h-1zM15 1h1v1h-1zM12 2h1v1h-1zM14 2h1v1h-1zM12 3h2v1h-2zM12 4h1v1h-1zM14 4h1v1h-1zM12 5h1v1h-1zM15 5h1v1h-1zM12 6h1v1h-1zM16 6h1v1h-1zM18 0h1v1h-1zM18 1h1v1h-1zM18 2h4v1h-4zM18 3h1v1h-1zM22 3h1v1h-1zM18 4h1v1h-1zM22 4h1v1h-1zM18 5h1v1h-1zM22 5h1v1h-1zM18 6h4v1h-4z" fill="#000"/></svg>
<svg style="left:497px;top:358px" width="24" height="9" shape-rendering="crispEdges"><path d="M2 0h1v1h-1zM1 1h2v1h-2zM2 2h1v1h-1zM2 3h1v1h-1zM2 4h1v1h-1zM2 5h1v1h-1zM2 6h1v1h-1zM12 0h1v1h-1zM16 0h1v1h-1zM12 1h1v1h-1zM15 1h1v1h-1zM12 2h1v1h-1zM14 2h1v1h-1zM12 3h2v1h-2zM12 4h1v1h-1zM14 4h1v1h-1zM12 5h1v1h-1zM15 5h1v1h-1zM12 6h1v1h-1zM16 6h1v1h-1zM18 0h1v1h-1zM18 1h1v1h-1zM18 2h4v1h-4zM18 3h1v1h-1zM22 3h1v1h-1zM18 4h1v1h-1zM22 4h1v1h-1zM18 5h1v1h-1zM22 5h1v1h-1zM18 6h4v1h-4z" fill="#000"/></svg>
<svg style="left:497px;top:412px" width="24" height="9" shape-rendering="crispEdges"><path d="M2 0h1v1h-1zM1 1h2v1h-2zM2 2h1v1h-1zM2 3h1v1h-1zM2 4h1v1h-1zM2 5h1v1h-1zM2 6h1v1h-1zM12 0h1v1h-1zM16 0h1v1h-1zM12 1h1v1h-1zM15 1h1v1h-1zM12 2h1v1h-1zM14 2h1v1h-1zM12 3h2v1h-2zM12 4h1v1h-1zM14 4h1v1h-1zM12 5h1v1h-1zM15 5h1v1h-1zM12 6h1v1h-1zM16 6h1v1h-1zM18 0h1v1h-1zM18 1h1v1h-1zM18 2h4v1h-4zM18 3h1v1h-1zM22 3h1v1h-1zM18 4h1v1h-1zM22 4h1v1h-1zM18 5h1v1h-1zM22 5h1v1h-1zM18 6h4v1h-4z" fill="#000"/></svg>
<svg style="left:497px;top:430px" width="24" height="9" shape-rendering="crispEdges"><path d="M2 0h1v1h-1zM1 1h2v1h-2zM2 2h1v1h-1zM2 3h1v1h-1zM2 4h1v1h-1zM2 5h1v1h-1zM2 6h1v1h-1zM12 0h1v1h-1zM16 0h1v1h-1zM12 1h1v1h-1zM15 1h1v1h-1zM12 2h1v1h-1zM14 2h1v1h-1zM12 3h2v1h-2zM12 4h1v1h-1zM14 4h1v1h-1zM12 5h1v1h-1zM15 5h1v1h-1zM12 6h1v1h-1zM16 6h1v1h-1zM18 0h1v1h-1zM18 1h1v1h-1zM18 2h4v1h-4zM18 3h1v1h-1zM22 3h1v1h-1zM18 4h1v1h-1zM22 4h1v1h-1zM18 5h1v1h-1zM22 5h1v1h-1zM18 6h4v1h-4z" fill="#000"/></svg>
<svg style="left:497px;top:448px" width="24" height="9" shape-rendering="crispEdges"><path d="M2 0h1v1h-1zM1 1h2v1h-2zM2 2h1v1h-1zM2 3h1v1h-1zM2 4h1v1h-1zM2 5h1v1h-1zM2 6h1v1h-1zM12 0h1v1h-1zM16 0h1v1h-1zM12 1h1v1h-1zM15 1h1v1h-1zM12 2h1v1h-1zM14 2h1v1h-1zM12 3h2v1h-2zM12 4h1v1h-1zM14 4h1v1h-1zM12 5h1v1h-1zM15 5h1v1h-1zM12 6h1v1h-1zM16 6h1v1h-1zM18 0h1v1h-1zM18 1h1v1h-1zM18 2h4v1h-4zM18 3h1v1h-1zM22 3h1v1h-1zM18 4h1v1h-1zM22 4h1v1h-1zM18 5h1v1h-1zM22 5h1v1h-1zM18 6h4v1h-4z" fill="#000"/></svg>
<div style="left:513px;top:289px;width:1px;height:3px;background:#000"></div>
<div style="left:513px;top:307px;width:1px;height:3px;background:#000"></div>
<div style="left:513px;top:325px;width:1px;height:3px;background:#000"></div>
<div style="left:513px;top:379px;width:1px;height:3px;background:#000"></div>
<div style="left:513px;top:397px;width:1px;height:3px;background:#000"></div>
<div style="left:513px;top:469px;width:1px;height:3px;background:#000"></div>
<svg style="left:229px;top:483px" width="54" height="9" shape-rendering="crispEdges"><path d="M2 0h1v1h-1zM1 1h1v1h-1zM3 1h1v1h-1zM0 2h1v1h-1zM4 2h1v1h-1zM0 3h1v1h-1zM4 3h1v1h-1zM0 4h5v1h-5zM0 5h1v1h-1zM4 5h1v1h-1zM0 6h1v1h-1zM4 6h1v1h-1zM7 2h4v1h-4zM7 3h1v1h-1zM7 4h1v1h-1zM7 5h1v1h-1zM7 6h1v1h-1zM14 0h1v1h-1zM13 2h2v1h-2zM14 3h1v1h-1zM14 4h1v1h-1zM14 5h1v1h-1zM13 6h3v1h-3zM19 2h3v1h-3zM22 3h1v1h-1zM19 4h4v1h-4zM18 5h1v1h-1zM22 5h1v1h-1zM19 6h4v1h-4zM25 0h2v1h-2zM26 1h1v1h-1zM26 2h1v1h-1zM26 3h1v1h-1zM26 4h1v1h-1zM26 5h1v1h-1zM25 6h3v1h-3zM31 5h2v1h-2zM31 6h2v1h-2zM38 0h1v1h-1zM38 1h1v1h-1zM37 2h3v1h-3zM38 3h1v1h-1zM38 4h1v1h-1zM38 5h1v1h-1zM39 6h2v1h-2zM44 0h1v1h-1zM44 1h1v1h-1zM43 2h3v1h-3zM44 3h1v1h-1zM44 4h1v1h-1zM44 5h1v1h-1zM45 6h2v1h-2zM50 0h2v1h-2zM49 1h1v1h-1zM48 2h4v1h-4zM49 3h1v1h-1zM49 4h1v1h-1zM49 5h1v1h-1zM49 6h1v1h-1z" fill="#000"/></svg>
<svg style="left:428px;top:484px" width="18" height="9" shape-rendering="crispEdges"><path d="M2 0h1v1h-1zM2 1h1v1h-1zM1 2h3v1h-3zM2 3h1v1h-1zM2 4h1v1h-1zM2 5h1v1h-1zM3 6h2v1h-2zM8 0h1v1h-1zM8 1h1v1h-1zM7 2h3v1h-3zM8 3h1v1h-1zM8 4h1v1h-1zM8 5h1v1h-1zM9 6h2v1h-2zM14 0h2v1h-2zM13 1h1v1h-1zM12 2h4v1h-4zM13 3h1v1h-1zM13 4h1v1h-1zM13 5h1v1h-1zM13 6h1v1h-1z" fill="#000"/></svg>
<svg style="left:485px;top:484px" width="36" height="9" shape-rendering="crispEdges"><path d="M1 0h3v1h-3zM0 1h1v1h-1zM4 1h1v1h-1zM4 2h1v1h-1zM2 3h2v1h-2zM4 4h1v1h-1zM0 5h1v1h-1zM4 5h1v1h-1zM1 6h3v1h-3zM6 0h5v1h-5zM6 1h1v1h-1zM6 2h4v1h-4zM10 3h1v1h-1zM10 4h1v1h-1zM6 5h1v1h-1zM10 5h1v1h-1zM7 6h3v1h-3zM13 0h3v1h-3zM12 1h1v1h-1zM16 1h1v1h-1zM12 2h1v1h-1zM16 2h1v1h-1zM13 3h3v1h-3zM12 4h1v1h-1zM16 4h1v1h-1zM12 5h1v1h-1zM16 5h1v1h-1zM13 6h3v1h-3zM24 0h1v1h-1zM28 0h1v1h-1zM24 1h1v1h-1zM27 1h1v1h-1zM24 2h1v1h-1zM26 2h1v1h-1zM24 3h2v1h-2zM24 4h1v1h-1zM26 4h1v1h-1zM24 5h1v1h-1zM27 5h1v1h-1zM24 6h1v1h-1zM28 6h1v1h-1zM30 0h1v1h-1zM30 1h1v1h-1zM30 2h4v1h-4zM30 3h1v1h-1zM34 3h1v1h-1zM30 4h1v1h-1zM34 4h1v1h-1zM30 5h1v1h-1zM34 5h1v1h-1zM30 6h4v1h-4z" fill="#000"/></svg>
<svg style="left:211px;top:84px" width="14" height="16" viewBox="0 0 14 16"><path d="M0.5 0.5H7.5L11.5 4.5V14.5H0.5Z" fill="url(#docg)" stroke="#5a5e88"/><path d="M7.5 0.5V4.5H11.5" fill="#fff" stroke="#5a5e88"/></svg>
<svg style="left:211px;top:102px" width="14" height="16" viewBox="0 0 14 16"><path d="M0.5 0.5H7.5L11.5 4.5V14.5H0.5Z" fill="url(#docg)" stroke="#5a5e88"/><path d="M7.5 0.5V4.5H11.5" fill="#fff" stroke="#5a5e88"/></svg>
<svg style="left:211px;top:120px" width="14" height="16" viewBox="0 0 14 16"><path d="M0.5 0.5H7.5L11.5 4.5V14.5H0.5Z" fill="url(#docg)" stroke="#5a5e88"/><path d="M7.5 0.5V4.5H11.5" fill="#fff" stroke="#5a5e88"/></svg>
<svg style="left:211px;top:138px" width="14" height="16" viewBox="0 0 14 16"><path d="M0.5 0.5H7.5L11.5 4.5V14.5H0.5Z" fill="url(#docg)" stroke="#5a5e88"/><path d="M7.5 0.5V4.5H11.5" fill="#fff" stroke="#5a5e88"/></svg>
<svg style="left:211px;top:156px" width="14" height="16" viewBox="0 0 14 16"><path d="M0.5 0.5H7.5L11.5 4.5V14.5H0.5Z" fill="url(#docg)" stroke="#5a5e88"/><path d="M7.5 0.5V4.5H11.5" fill="#fff" stroke="#5a5e88"/></svg>
<svg style="left:211px;top:174px" width="14" height="16" viewBox="0 0 14 16"><path d="M0.5 0.5H7.5L11.5 4.5V14.5H0.5Z" fill="url(#docg)" stroke="#5a5e88"/><path d="M7.5 0.5V4.5H11.5" fill="#fff" stroke="#5a5e88"/></svg>
<svg style="left:211px;top:192px" width="14" height="16" viewBox="0 0 14 16"><path d="M0.5 0.5H7.5L11.5 4.5V14.5H0.5Z" fill="url(#docg)" stroke="#5a5e88"/><path d="M7.5 0.5V4.5H11.5" fill="#fff" stroke="#5a5e88"/></svg>
<svg style="left:211px;top:210px" width="14" height="16" viewBox="0 0 14 16"><path d="M0.5 0.5H7.5L11.5 4.5V14.5H0.5Z" fill="url(#docg)" stroke="#5a5e88"/><path d="M7.5 0.5V4.5H11.5" fill="#fff" stroke="#5a5e88"/></svg>
<svg style="left:211px;top:228px" width="14" height="16" viewBox="0 0 14 16"><path d="M0.5 0.5H7.5L11.5 4.5V14.5H0.5Z" fill="url(#docg)" stroke="#5a5e88"/><path d="M7.5 0.5V4.5H11.5" fill="#fff" stroke="#5a5e88"/></svg>
<svg style="left:211px;top:246px" width="14" height="16" viewBox="0 0 14 16"><path d="M0.5 0.5H7.5L11.5 4.5V14.5H0.5Z" fill="url(#docg)" stroke="#5a5e88"/><path d="M7.5 0.5V4.5H11.5" fill="#fff" stroke="#5a5e88"/></svg>
<svg style="left:211px;top:408px" width="14" height="16" viewBox="0 0 14 16"><path d="M0.5 0.5H7.5L11.5 4.5V14.5H0.5Z" fill="url(#docg)" stroke="#5a5e88"/><path d="M7.5 0.5V4.5H11.5" fill="#fff" stroke="#5a5e88"/></svg>
<svg style="left:212px;top:265px" width="14" height="16" viewBox="0 0 14 16"><rect x="0.5" y="0.5" width="2" height="3" fill="none" stroke="#000"/><path d="M4.5 1L5.5 0.5V4M4.5 4H6.5" stroke="#000" fill="none"/><rect x="8.5" y="0.5" width="2" height="3" fill="none" stroke="#000"/><path d="M0.5 6L1.5 5.5V9M0.5 9H2.5" stroke="#000" fill="none"/><rect x="4.5" y="5.5" width="2" height="3" fill="none" stroke="#000"/><path d="M8.5 6L9.5 5.5V9M8.5 9H10.5" stroke="#000" fill="none"/><rect x="0.5" y="10.5" width="2" height="3" fill="none" stroke="#000"/><path d="M4.5 11L5.5 10.5V14M4.5 14H6.5" stroke="#000" fill="none"/><rect x="8.5" y="10.5" width="2" height="3" fill="none" stroke="#000"/></svg>
<svg style="left:211px;top:282px" width="14" height="16" viewBox="0 0 14 16"><path d="M0.5 0.5H7.5L11.5 4.5V14.5H0.5Z" fill="url(#docg)" stroke="#5a5e88"/><path d="M7.5 0.5V4.5H11.5" fill="#fff" stroke="#5a5e88"/><circle cx="2.6" cy="8.6" r="4.2" fill="#d4ecfa" stroke="#4a82c0" stroke-width="0.9"/><path d="M2.5 8L4.5 8.5L4 12.5L2.5 11.5Z M-1 8L1 7L0.5 10Z" fill="#3a78c0"/></svg>
<svg style="left:209px;top:300px" width="14" height="16" viewBox="0 0 14 16"><path d="M0.8 14.2L4.8 10.2" stroke="#a06000" stroke-width="3" stroke-linecap="round"/><path d="M0.8 14.2L4.8 10.2" stroke="#f8c030" stroke-width="1.4" stroke-linecap="round"/><path d="M8.5 3.5L11.5 0.8M11 6L14 3.3" stroke="#606070" stroke-width="2.2" stroke-linecap="round"/><path d="M8.5 3.5L11.5 0.8M11 6L14 3.3" stroke="#e8e8f0" stroke-width="0.9"/><path d="M6.5 1.8L12.8 8L9 11.5L5 11.2L3.3 9.5L3 5.3Z" fill="url(#gold)" stroke="#b06a00" stroke-width="0.9" stroke-linejoin="round"/></svg>
<svg style="left:209px;top:318px" width="14" height="16" viewBox="0 0 14 16"><path d="M0.8 14.2L4.8 10.2" stroke="#a06000" stroke-width="3" stroke-linecap="round"/><path d="M0.8 14.2L4.8 10.2" stroke="#f8c030" stroke-width="1.4" stroke-linecap="round"/><path d="M8.5 3.5L11.5 0.8M11 6L14 3.3" stroke="#606070" stroke-width="2.2" stroke-linecap="round"/><path d="M8.5 3.5L11.5 0.8M11 6L14 3.3" stroke="#e8e8f0" stroke-width="0.9"/><path d="M6.5 1.8L12.8 8L9 11.5L5 11.2L3.3 9.5L3 5.3Z" fill="url(#gold)" stroke="#b06a00" stroke-width="0.9" stroke-linejoin="round"/></svg>
<svg style="left:209px;top:336px" width="14" height="16" viewBox="0 0 14 16"><path d="M0.8 14.2L4.8 10.2" stroke="#a06000" stroke-width="3" stroke-linecap="round"/><path d="M0.8 14.2L4.8 10.2" stroke="#f8c030" stroke-width="1.4" stroke-linecap="round"/><path d="M8.5 3.5L11.5 0.8M11 6L14 3.3" stroke="#606070" stroke-width="2.2" stroke-linecap="round"/><path d="M8.5 3.5L11.5 0.8M11 6L14 3.3" stroke="#e8e8f0" stroke-width="0.9"/><path d="M6.5 1.8L12.8 8L9 11.5L5 11.2L3.3 9.5L3 5.3Z" fill="url(#gold)" stroke="#b06a00" stroke-width="0.9" stroke-linejoin="round"/></svg>
<svg style="left:209px;top:354px" width="14" height="16" viewBox="0 0 14 16"><path d="M0.8 14.2L4.8 10.2" stroke="#a06000" stroke-width="3" stroke-linecap="round"/><path d="M0.8 14.2L4.8 10.2" stroke="#f8c030" stroke-width="1.4" stroke-linecap="round"/><path d="M8.5 3.5L11.5 0.8M11 6L14 3.3" stroke="#606070" stroke-width="2.2" stroke-linecap="round"/><path d="M8.5 3.5L11.5 0.8M11 6L14 3.3" stroke="#e8e8f0" stroke-width="0.9"/><path d="M6.5 1.8L12.8 8L9 11.5L5 11.2L3.3 9.5L3 5.3Z" fill="url(#gold)" stroke="#b06a00" stroke-width="0.9" stroke-linejoin="round"/></svg>
<svg style="left:211px;top:372px" width="14" height="16" viewBox="0 0 14 16"><path d="M0.5 0.5H7.5L11.5 4.5V14.5H0.5Z" fill="url(#docg)" stroke="#5a5e88"/><path d="M7.5 0.5V4.5H11.5" fill="#fff" stroke="#5a5e88"/><polygon points="6.62,11.27 4.97,12.42 4.04,14.20 2.22,13.34 0.22,13.42 0.05,11.42 -1.02,9.73 0.63,8.58 1.56,6.80 3.38,7.66 5.38,7.58 5.55,9.58" fill="#e8b030" stroke="#7a4a08" stroke-width="0.9" stroke-linejoin="round"/><circle cx="2.8" cy="10.5" r="1" fill="#5a4a40"/></svg>
<svg style="left:210px;top:390px" width="14" height="16" viewBox="0 0 14 16"><path d="M5.5 2.5V11M13 1.5V9.5" stroke="#3a70c0" stroke-width="1.3"/><path d="M5 1.8L13.5 0.8V3L5 4Z" fill="#3a70c0"/><path d="M1.5 12Q3 9.5 5.8 10.3L5.5 12.5Q4 14 1.5 13.5Z" fill="#a8c8f0" stroke="#3a70c0"/><path d="M9 11Q10.5 8.5 13.3 9.3L13 11.5Q11.5 13 9 12.5Z" fill="#a8c8f0" stroke="#3a70c0"/></svg>
<svg style="left:209px;top:426px" width="16" height="14" viewBox="0 0 16 14"><defs><linearGradient id="sky" x1="0" y1="0" x2="0" y2="1"><stop offset="0" stop-color="#b4e4f8"/><stop offset="1" stop-color="#58b4e4"/></linearGradient></defs><rect x="0.5" y="0.5" width="15" height="13" fill="#fff" stroke="#5a5e88"/><rect x="2" y="2" width="12" height="10" fill="url(#sky)"/><path d="M2 8.5Q5 5.5 8 6.5Q11 5 14 4.5V10H2Z" fill="#1e6e52"/><path d="M12 6L13 9.5H11Z" fill="#d8e8a0"/><path d="M2 9.5H14V12H2Z" fill="#3a9ad8"/><path d="M3 10.5H9" stroke="#a0d8f8" stroke-width="0.6"/></svg>
<svg style="left:209px;top:444px" width="16" height="14" viewBox="0 0 16 14"><defs><linearGradient id="sky" x1="0" y1="0" x2="0" y2="1"><stop offset="0" stop-color="#b4e4f8"/><stop offset="1" stop-color="#58b4e4"/></linearGradient></defs><rect x="0.5" y="0.5" width="15" height="13" fill="#fff" stroke="#5a5e88"/><rect x="2" y="2" width="12" height="10" fill="url(#sky)"/><path d="M2 8.5Q5 5.5 8 6.5Q11 5 14 4.5V10H2Z" fill="#1e6e52"/><path d="M12 6L13 9.5H11Z" fill="#d8e8a0"/><path d="M2 9.5H14V12H2Z" fill="#3a9ad8"/><path d="M3 10.5H9" stroke="#a0d8f8" stroke-width="0.6"/></svg>
<svg style="left:209px;top:460px" width="14" height="16" viewBox="0 0 14 16"><path d="M0 0.5H14.5V14" fill="#c4c8dc" stroke="#5a5e88"/><rect x="0" y="1" width="14" height="9" fill="#c4c8dc"/><rect x="0" y="4" width="4" height="3" fill="#f0f0f0"/><rect x="7" y="2.5" width="6" height="6" fill="#e04858"/><path d="M8.5 4L11.5 7M11.5 4L8.5 7" stroke="#fff" stroke-width="0.8"/><rect x="0" y="10" width="14" height="4" fill="#e4e4e4"/></svg>
<svg style="left:210px;top:480px" width="15" height="15" viewBox="0 0 15 15"><path d="M0.8 13.3L8.3 1.2H12.6L13.4 13.3H10L9.8 10.3H6.2L4.3 13.3Z M7.4 8.3H9.7L9.4 4.2Z" fill="#b4dcf6" stroke="#5474b0" stroke-width="0.9" fill-rule="evenodd"/></svg>
<div style="left:228px;top:165px;width:285px;height:321px;background:#dcdcdc;border:1px solid #a4a4a4"></div>
<div style="left:229px;top:166px;width:283px;height:19px;background:linear-gradient(#ececec,#dedede)"></div>
<div style="left:229px;top:185px;width:283px;height:1px;background:#a8a8a8"></div>
<svg style="left:233px;top:173px" width="54" height="9" shape-rendering="crispEdges"><path d="M1 0h3v1h-3zM0 1h1v1h-1zM4 1h1v1h-1zM0 2h1v1h-1zM4 2h1v1h-1zM0 3h1v1h-1zM4 3h1v1h-1zM0 4h1v1h-1zM4 4h1v1h-1zM0 5h1v1h-1zM4 5h1v1h-1zM1 6h3v1h-3zM6 2h4v1h-4zM6 3h1v1h-1zM10 3h1v1h-1zM6 4h1v1h-1zM10 4h1v1h-1zM6 5h1v1h-1zM10 5h1v1h-1zM6 6h4v1h-4zM6 7h1v1h-1zM6 8h1v1h-1zM13 2h3v1h-3zM12 3h1v1h-1zM16 3h1v1h-1zM12 4h5v1h-5zM12 5h1v1h-1zM13 6h3v1h-3zM18 2h4v1h-4zM18 3h1v1h-1zM22 3h1v1h-1zM18 4h1v1h-1zM22 4h1v1h-1zM18 5h1v1h-1zM22 5h1v1h-1zM18 6h1v1h-1zM22 6h1v1h-1zM30 2h1v1h-1zM34 2h1v1h-1zM30 3h1v1h-1zM34 3h1v1h-1zM30 4h1v1h-1zM32 4h1v1h-1zM34 4h1v1h-1zM30 5h1v1h-1zM32 5h1v1h-1zM34 5h1v1h-1zM31 6h1v1h-1zM33 6h1v1h-1zM38 0h1v1h-1zM37 2h2v1h-2zM38 3h1v1h-1zM38 4h1v1h-1zM38 5h1v1h-1zM37 6h3v1h-3zM44 0h1v1h-1zM44 1h1v1h-1zM43 2h3v1h-3zM44 3h1v1h-1zM44 4h1v1h-1zM44 5h1v1h-1zM45 6h2v1h-2zM48 0h1v1h-1zM48 1h1v1h-1zM48 2h4v1h-4zM48 3h1v1h-1zM52 3h1v1h-1zM48 4h1v1h-1zM52 4h1v1h-1zM48 5h1v1h-1zM52 5h1v1h-1zM48 6h1v1h-1zM52 6h1v1h-1z" fill="#000"/></svg>
<div style="left:479px;top:174px;width:8px;height:2px;background:#606060"></div>
<svg style="left:496px;top:171px" width="8" height="8" shape-rendering="crispEdges"><path d="M1 0h2v1h-2zM5 0h2v1h-2zM0 1h3v1h-3zM5 1h3v1h-3zM1 2h6v1h-6zM2 3h4v1h-4zM2 4h4v1h-4zM1 5h6v1h-6zM0 6h3v1h-3zM5 6h3v1h-3zM1 7h2v1h-2zM5 7h2v1h-2z" fill="#606060"/></svg>
<svg style="left:237px;top:193px" width="102" height="9" shape-rendering="crispEdges"><path d="M4 0h1v1h-1zM3 1h1v1h-1zM3 2h1v1h-1zM2 3h1v1h-1zM1 4h1v1h-1zM1 5h1v1h-1zM0 6h1v1h-1zM7 2h4v1h-4zM7 3h1v1h-1zM7 4h1v1h-1zM7 5h1v1h-1zM7 6h1v1h-1zM16 0h1v1h-1zM16 1h1v1h-1zM13 2h4v1h-4zM12 3h1v1h-1zM16 3h1v1h-1zM12 4h1v1h-1zM16 4h1v1h-1zM12 5h1v1h-1zM16 5h1v1h-1zM13 6h4v1h-4zM22 0h1v1h-1zM21 1h1v1h-1zM21 2h1v1h-1zM20 3h1v1h-1zM19 4h1v1h-1zM19 5h1v1h-1zM18 6h1v1h-1zM26 0h1v1h-1zM25 1h2v1h-2zM26 2h1v1h-1zM26 3h1v1h-1zM26 4h1v1h-1zM26 5h1v1h-1zM26 6h1v1h-1zM34 0h1v1h-1zM33 1h1v1h-1zM33 2h1v1h-1zM32 3h1v1h-1zM31 4h1v1h-1zM31 5h1v1h-1zM30 6h1v1h-1zM36 0h1v1h-1zM36 1h1v1h-1zM36 2h1v1h-1zM39 2h1v1h-1zM36 3h1v1h-1zM38 3h1v1h-1zM36 4h2v1h-2zM36 5h1v1h-1zM38 5h1v1h-1zM36 6h1v1h-1zM39 6h1v1h-1zM42 2h1v1h-1zM46 2h1v1h-1zM42 3h1v1h-1zM46 3h1v1h-1zM42 4h1v1h-1zM46 4h1v1h-1zM42 5h1v1h-1zM46 5h1v1h-1zM43 6h4v1h-4zM48 2h5v1h-5zM51 3h1v1h-1zM50 4h1v1h-1zM49 5h1v1h-1zM48 6h5v1h-5zM54 0h1v1h-1zM54 1h1v1h-1zM54 2h1v1h-1zM57 2h1v1h-1zM54 3h1v1h-1zM56 3h1v1h-1zM54 4h2v1h-2zM54 5h1v1h-1zM56 5h1v1h-1zM54 6h1v1h-1zM57 6h1v1h-1zM62 0h1v1h-1zM61 2h2v1h-2zM62 3h1v1h-1zM62 4h1v1h-1zM62 5h1v1h-1zM61 6h3v1h-3zM66 2h4v1h-4zM66 3h1v1h-1zM70 3h1v1h-1zM66 4h1v1h-1zM70 4h1v1h-1zM66 5h1v1h-1zM70 5h1v1h-1zM66 6h1v1h-1zM70 6h1v1h-1zM73 2h3v1h-3zM76 3h1v1h-1zM73 4h4v1h-4zM72 5h1v1h-1zM76 5h1v1h-1zM73 6h4v1h-4zM79 5h2v1h-2zM79 6h2v1h-2zM84 2h2v1h-2zM87 2h1v1h-1zM84 3h1v1h-1zM86 3h1v1h-1zM88 3h1v1h-1zM84 4h1v1h-1zM86 4h1v1h-1zM88 4h1v1h-1zM84 5h1v1h-1zM86 5h1v1h-1zM88 5h1v1h-1zM84 6h1v1h-1zM86 6h1v1h-1zM88 6h1v1h-1zM92 0h1v1h-1zM91 2h2v1h-2zM92 3h1v1h-1zM92 4h1v1h-1zM92 5h1v1h-1zM91 6h3v1h-3zM100 0h1v1h-1zM100 1h1v1h-1zM97 2h4v1h-4zM96 3h1v1h-1zM100 3h1v1h-1zM96 4h1v1h-1zM100 4h1v1h-1zM96 5h1v1h-1zM100 5h1v1h-1zM97 6h4v1h-4z" fill="#000"/></svg>
<div style="left:236px;top:207px;width:270px;height:242px;background:#f8f6fa;border:1px solid #a4b8d4"></div>
<div style="left:493px;top:288px;width:12px;height:160px;background:#c9cccc"></div>
<svg style="left:281px;top:224px" width="42" height="9" shape-rendering="crispEdges"><path d="M2 0h1v1h-1zM1 1h1v1h-1zM3 1h1v1h-1zM0 2h1v1h-1zM4 2h1v1h-1zM0 3h1v1h-1zM4 3h1v1h-1zM0 4h5v1h-5zM0 5h1v1h-1zM4 5h1v1h-1zM0 6h1v1h-1zM4 6h1v1h-1zM7 0h3v1h-3zM6 1h1v1h-1zM10 1h1v1h-1zM6 2h1v1h-1zM6 3h1v1h-1zM6 4h1v1h-1zM6 5h1v1h-1zM10 5h1v1h-1zM7 6h3v1h-3zM13 0h3v1h-3zM12 1h1v1h-1zM16 1h1v1h-1zM12 2h1v1h-1zM16 2h1v1h-1zM13 3h4v1h-4zM16 4h1v1h-1zM16 5h1v1h-1zM13 6h3v1h-3zM18 0h5v1h-5zM22 1h1v1h-1zM21 2h1v1h-1zM20 3h1v1h-1zM19 4h1v1h-1zM19 5h1v1h-1zM19 6h1v1h-1zM25 2h4v1h-4zM24 3h1v1h-1zM25 4h3v1h-3zM28 5h1v1h-1zM24 6h4v1h-4zM30 2h4v1h-4zM30 3h1v1h-1zM34 3h1v1h-1zM30 4h1v1h-1zM34 4h1v1h-1zM30 5h1v1h-1zM34 5h1v1h-1zM30 6h1v1h-1zM34 6h1v1h-1zM40 0h1v1h-1zM40 1h1v1h-1zM37 2h4v1h-4zM36 3h1v1h-1zM40 3h1v1h-1zM36 4h1v1h-1zM40 4h1v1h-1zM36 5h1v1h-1zM40 5h1v1h-1zM37 6h4v1h-4z" fill="#222228"/></svg>
<svg style="left:409px;top:224px" width="48" height="9" shape-rendering="crispEdges"><path d="M0 0h1v1h-1zM0 1h1v1h-1zM0 2h1v1h-1zM0 3h1v1h-1zM0 4h1v1h-1zM0 5h1v1h-1zM0 6h5v1h-5zM8 0h1v1h-1zM7 2h2v1h-2zM8 3h1v1h-1zM8 4h1v1h-1zM8 5h1v1h-1zM7 6h3v1h-3zM13 2h4v1h-4zM12 3h1v1h-1zM13 4h3v1h-3zM16 5h1v1h-1zM12 6h4v1h-4zM20 0h1v1h-1zM20 1h1v1h-1zM19 2h3v1h-3zM20 3h1v1h-1zM20 4h1v1h-1zM20 5h1v1h-1zM21 6h2v1h-2zM24 0h4v1h-4zM24 1h1v1h-1zM28 1h1v1h-1zM24 2h1v1h-1zM28 2h1v1h-1zM24 3h4v1h-4zM24 4h1v1h-1zM24 5h1v1h-1zM24 6h1v1h-1zM31 0h2v1h-2zM32 1h1v1h-1zM32 2h1v1h-1zM32 3h1v1h-1zM32 4h1v1h-1zM32 5h1v1h-1zM31 6h3v1h-3zM37 2h3v1h-3zM40 3h1v1h-1zM37 4h4v1h-4zM36 5h1v1h-1zM40 5h1v1h-1zM37 6h4v1h-4zM42 2h1v1h-1zM46 2h1v1h-1zM42 3h1v1h-1zM46 3h1v1h-1zM42 4h1v1h-1zM46 4h1v1h-1zM42 5h1v1h-1zM46 5h1v1h-1zM43 6h4v1h-4zM46 7h1v1h-1zM43 8h3v1h-3z" fill="#222228"/></svg>
<svg style="left:281px;top:264px" width="36" height="9" shape-rendering="crispEdges"><path d="M0 0h1v1h-1zM4 0h1v1h-1zM0 1h2v1h-2zM3 1h2v1h-2zM0 2h1v1h-1zM2 2h1v1h-1zM4 2h1v1h-1zM0 3h1v1h-1zM2 3h1v1h-1zM4 3h1v1h-1zM0 4h1v1h-1zM4 4h1v1h-1zM0 5h1v1h-1zM4 5h1v1h-1zM0 6h1v1h-1zM4 6h1v1h-1zM8 0h1v1h-1zM7 2h2v1h-2zM8 3h1v1h-1zM8 4h1v1h-1zM8 5h1v1h-1zM7 6h3v1h-3zM16 0h1v1h-1zM16 1h1v1h-1zM13 2h4v1h-4zM12 3h1v1h-1zM16 3h1v1h-1zM12 4h1v1h-1zM16 4h1v1h-1zM12 5h1v1h-1zM16 5h1v1h-1zM13 6h4v1h-4zM20 0h1v1h-1zM19 1h1v1h-1zM21 1h1v1h-1zM18 2h1v1h-1zM22 2h1v1h-1zM18 3h1v1h-1zM22 3h1v1h-1zM18 4h5v1h-5zM18 5h1v1h-1zM22 5h1v1h-1zM18 6h1v1h-1zM22 6h1v1h-1zM24 0h1v1h-1zM28 0h1v1h-1zM24 1h2v1h-2zM27 1h2v1h-2zM24 2h1v1h-1zM26 2h1v1h-1zM28 2h1v1h-1zM24 3h1v1h-1zM26 3h1v1h-1zM28 3h1v1h-1zM24 4h1v1h-1zM28 4h1v1h-1zM24 5h1v1h-1zM28 5h1v1h-1zM24 6h1v1h-1zM28 6h1v1h-1zM30 0h4v1h-4zM30 1h1v1h-1zM34 1h1v1h-1zM30 2h1v1h-1zM34 2h1v1h-1zM30 3h4v1h-4zM30 4h1v1h-1zM30 5h1v1h-1zM30 6h1v1h-1z" fill="#222228"/></svg>
<svg style="left:409px;top:264px" width="42" height="9" shape-rendering="crispEdges"><path d="M0 0h4v1h-4zM0 1h1v1h-1zM4 1h1v1h-1zM0 2h1v1h-1zM4 2h1v1h-1zM0 3h4v1h-4zM0 4h1v1h-1zM2 4h1v1h-1zM0 5h1v1h-1zM3 5h1v1h-1zM0 6h1v1h-1zM4 6h1v1h-1zM6 0h5v1h-5zM8 1h1v1h-1zM8 2h1v1h-1zM8 3h1v1h-1zM8 4h1v1h-1zM8 5h1v1h-1zM8 6h1v1h-1zM12 0h5v1h-5zM12 1h1v1h-1zM12 2h1v1h-1zM12 3h4v1h-4zM12 4h1v1h-1zM12 5h1v1h-1zM12 6h1v1h-1zM18 0h4v1h-4zM18 1h1v1h-1zM22 1h1v1h-1zM18 2h1v1h-1zM22 2h1v1h-1zM18 3h4v1h-4zM18 4h1v1h-1zM20 4h1v1h-1zM18 5h1v1h-1zM21 5h1v1h-1zM18 6h1v1h-1zM22 6h1v1h-1zM25 2h3v1h-3zM24 3h1v1h-1zM28 3h1v1h-1zM24 4h5v1h-5zM24 5h1v1h-1zM25 6h3v1h-3zM31 2h3v1h-3zM34 3h1v1h-1zM31 4h4v1h-4zM30 5h1v1h-1zM34 5h1v1h-1zM31 6h4v1h-4zM40 0h1v1h-1zM40 1h1v1h-1zM37 2h4v1h-4zM36 3h1v1h-1zM40 3h1v1h-1zM36 4h1v1h-1zM40 4h1v1h-1zM36 5h1v1h-1zM40 5h1v1h-1zM37 6h4v1h-4z" fill="#222228"/></svg>
<svg style="left:281px;top:304px" width="30" height="9" shape-rendering="crispEdges"><path d="M1 0h3v1h-3zM0 1h1v1h-1zM4 1h1v1h-1zM0 2h1v1h-1zM0 3h1v1h-1zM2 3h3v1h-3zM0 4h1v1h-1zM4 4h1v1h-1zM0 5h1v1h-1zM4 5h1v1h-1zM1 6h3v1h-3zM7 2h4v1h-4zM7 3h1v1h-1zM7 4h1v1h-1zM7 5h1v1h-1zM7 6h1v1h-1zM13 2h3v1h-3zM16 3h1v1h-1zM13 4h4v1h-4zM12 5h1v1h-1zM16 5h1v1h-1zM13 6h4v1h-4zM18 2h4v1h-4zM18 3h1v1h-1zM22 3h1v1h-1zM18 4h1v1h-1zM22 4h1v1h-1zM18 5h1v1h-1zM22 5h1v1h-1zM18 6h4v1h-4zM18 7h1v1h-1zM18 8h1v1h-1zM24 0h1v1h-1zM24 1h1v1h-1zM24 2h4v1h-4zM24 3h1v1h-1zM28 3h1v1h-1zM24 4h1v1h-1zM28 4h1v1h-1zM24 5h1v1h-1zM28 5h1v1h-1zM24 6h1v1h-1zM28 6h1v1h-1z" fill="#222228"/></svg>
<svg style="left:409px;top:304px" width="54" height="9" shape-rendering="crispEdges"><path d="M0 0h1v1h-1zM4 0h1v1h-1zM0 1h1v1h-1zM4 1h1v1h-1zM0 2h1v1h-1zM4 2h1v1h-1zM0 3h5v1h-5zM0 4h1v1h-1zM4 4h1v1h-1zM0 5h1v1h-1zM4 5h1v1h-1zM0 6h1v1h-1zM4 6h1v1h-1zM7 2h3v1h-3zM6 3h1v1h-1zM10 3h1v1h-1zM6 4h5v1h-5zM6 5h1v1h-1zM7 6h3v1h-3zM12 2h1v1h-1zM16 2h1v1h-1zM13 3h1v1h-1zM15 3h1v1h-1zM14 4h1v1h-1zM13 5h1v1h-1zM15 5h1v1h-1zM12 6h1v1h-1zM16 6h1v1h-1zM18 0h5v1h-5zM18 1h1v1h-1zM18 2h1v1h-1zM18 3h4v1h-4zM18 4h1v1h-1zM18 5h1v1h-1zM18 6h5v1h-5zM28 0h1v1h-1zM28 1h1v1h-1zM25 2h4v1h-4zM24 3h1v1h-1zM28 3h1v1h-1zM24 4h1v1h-1zM28 4h1v1h-1zM24 5h1v1h-1zM28 5h1v1h-1zM25 6h4v1h-4zM32 0h1v1h-1zM31 2h2v1h-2zM32 3h1v1h-1zM32 4h1v1h-1zM32 5h1v1h-1zM31 6h3v1h-3zM38 0h1v1h-1zM38 1h1v1h-1zM37 2h3v1h-3zM38 3h1v1h-1zM38 4h1v1h-1zM38 5h1v1h-1zM39 6h2v1h-2zM43 2h3v1h-3zM42 3h1v1h-1zM46 3h1v1h-1zM42 4h1v1h-1zM46 4h1v1h-1zM42 5h1v1h-1zM46 5h1v1h-1zM43 6h3v1h-3zM49 2h4v1h-4zM49 3h1v1h-1zM49 4h1v1h-1zM49 5h1v1h-1zM49 6h1v1h-1z" fill="#222228"/></svg>
<svg style="left:281px;top:344px" width="30" height="9" shape-rendering="crispEdges"><path d="M1 0h3v1h-3zM0 1h1v1h-1zM4 1h1v1h-1zM0 2h1v1h-1zM1 3h3v1h-3zM4 4h1v1h-1zM0 5h1v1h-1zM4 5h1v1h-1zM1 6h3v1h-3zM6 0h1v1h-1zM6 1h1v1h-1zM6 2h4v1h-4zM6 3h1v1h-1zM10 3h1v1h-1zM6 4h1v1h-1zM10 4h1v1h-1zM6 5h1v1h-1zM10 5h1v1h-1zM6 6h1v1h-1zM10 6h1v1h-1zM13 2h3v1h-3zM12 3h1v1h-1zM16 3h1v1h-1zM12 4h5v1h-5zM12 5h1v1h-1zM13 6h3v1h-3zM19 0h2v1h-2zM20 1h1v1h-1zM20 2h1v1h-1zM20 3h1v1h-1zM20 4h1v1h-1zM20 5h1v1h-1zM19 6h3v1h-3zM25 0h2v1h-2zM26 1h1v1h-1zM26 2h1v1h-1zM26 3h1v1h-1zM26 4h1v1h-1zM26 5h1v1h-1zM25 6h3v1h-3z" fill="#222228"/></svg>
<svg style="left:409px;top:344px" width="24" height="9" shape-rendering="crispEdges"><path d="M0 0h5v1h-5zM0 1h1v1h-1zM0 2h1v1h-1zM0 3h4v1h-4zM0 4h1v1h-1zM0 5h1v1h-1zM0 6h1v1h-1zM8 0h1v1h-1zM7 1h1v1h-1zM9 1h1v1h-1zM6 2h1v1h-1zM10 2h1v1h-1zM6 3h1v1h-1zM10 3h1v1h-1zM6 4h5v1h-5zM6 5h1v1h-1zM10 5h1v1h-1zM6 6h1v1h-1zM10 6h1v1h-1zM13 0h3v1h-3zM12 1h1v1h-1zM16 1h1v1h-1zM12 2h1v1h-1zM13 3h3v1h-3zM16 4h1v1h-1zM12 5h1v1h-1zM16 5h1v1h-1zM13 6h3v1h-3zM18 0h1v1h-1zM22 0h1v1h-1zM18 1h2v1h-2zM21 1h2v1h-2zM18 2h1v1h-1zM20 2h1v1h-1zM22 2h1v1h-1zM18 3h1v1h-1zM20 3h1v1h-1zM22 3h1v1h-1zM18 4h1v1h-1zM22 4h1v1h-1zM18 5h1v1h-1zM22 5h1v1h-1zM18 6h1v1h-1zM22 6h1v1h-1z" fill="#222228"/></svg>
<svg style="left:281px;top:384px" width="30" height="9" shape-rendering="crispEdges"><path d="M0 0h1v1h-1zM4 0h1v1h-1zM0 1h1v1h-1zM3 1h1v1h-1zM0 2h1v1h-1zM2 2h1v1h-1zM0 3h2v1h-2zM0 4h1v1h-1zM2 4h1v1h-1zM0 5h1v1h-1zM3 5h1v1h-1zM0 6h1v1h-1zM4 6h1v1h-1zM6 0h4v1h-4zM6 1h1v1h-1zM10 1h1v1h-1zM6 2h1v1h-1zM10 2h1v1h-1zM6 3h4v1h-4zM6 4h1v1h-1zM6 5h1v1h-1zM6 6h1v1h-1zM13 2h3v1h-3zM16 3h1v1h-1zM13 4h4v1h-4zM12 5h1v1h-1zM16 5h1v1h-1zM13 6h4v1h-4zM19 2h4v1h-4zM18 3h1v1h-1zM18 4h1v1h-1zM18 5h1v1h-1zM19 6h4v1h-4zM24 0h1v1h-1zM24 1h1v1h-1zM24 2h1v1h-1zM27 2h1v1h-1zM24 3h1v1h-1zM26 3h1v1h-1zM24 4h2v1h-2zM24 5h1v1h-1zM26 5h1v1h-1zM24 6h1v1h-1zM27 6h1v1h-1z" fill="#222228"/></svg>
<svg style="left:409px;top:384px" width="42" height="9" shape-rendering="crispEdges"><path d="M0 0h1v1h-1zM4 0h1v1h-1zM0 1h1v1h-1zM4 1h1v1h-1zM0 2h1v1h-1zM4 2h1v1h-1zM0 3h1v1h-1zM4 3h1v1h-1zM0 4h1v1h-1zM4 4h1v1h-1zM1 5h1v1h-1zM3 5h1v1h-1zM2 6h1v1h-1zM8 0h1v1h-1zM7 2h2v1h-2zM8 3h1v1h-1zM8 4h1v1h-1zM8 5h1v1h-1zM7 6h3v1h-3zM13 2h3v1h-3zM12 3h1v1h-1zM16 3h1v1h-1zM12 4h5v1h-5zM12 5h1v1h-1zM13 6h3v1h-3zM18 2h1v1h-1zM22 2h1v1h-1zM18 3h1v1h-1zM22 3h1v1h-1zM18 4h1v1h-1zM20 4h1v1h-1zM22 4h1v1h-1zM18 5h1v1h-1zM20 5h1v1h-1zM22 5h1v1h-1zM19 6h1v1h-1zM21 6h1v1h-1zM25 0h3v1h-3zM24 1h1v1h-1zM28 1h1v1h-1zM28 2h1v1h-1zM26 3h2v1h-2zM28 4h1v1h-1zM24 5h1v1h-1zM28 5h1v1h-1zM25 6h3v1h-3zM30 0h4v1h-4zM30 1h1v1h-1zM34 1h1v1h-1zM30 2h1v1h-1zM34 2h1v1h-1zM30 3h1v1h-1zM34 3h1v1h-1zM30 4h1v1h-1zM34 4h1v1h-1zM30 5h1v1h-1zM34 5h1v1h-1zM30 6h4v1h-4zM37 0h3v1h-3zM36 1h1v1h-1zM40 1h1v1h-1zM36 2h1v1h-1zM37 3h3v1h-3zM40 4h1v1h-1zM36 5h1v1h-1zM40 5h1v1h-1zM37 6h3v1h-3z" fill="#222228"/></svg>
<svg style="left:281px;top:424px" width="24" height="9" shape-rendering="crispEdges"><path d="M1 2h4v1h-4zM0 3h1v1h-1zM0 4h1v1h-1zM0 5h1v1h-1zM1 6h4v1h-4zM7 0h3v1h-3zM6 1h1v1h-1zM10 1h1v1h-1zM6 2h1v1h-1zM10 2h1v1h-1zM6 3h1v1h-1zM10 3h1v1h-1zM6 4h1v1h-1zM10 4h1v1h-1zM6 5h1v1h-1zM10 5h1v1h-1zM7 6h3v1h-3zM12 0h1v1h-1zM12 1h1v1h-1zM12 2h4v1h-4zM12 3h1v1h-1zM16 3h1v1h-1zM12 4h1v1h-1zM16 4h1v1h-1zM12 5h1v1h-1zM16 5h1v1h-1zM12 6h4v1h-4zM21 0h1v1h-1zM20 2h2v1h-2zM21 3h1v1h-1zM21 4h1v1h-1zM21 5h1v1h-1zM21 6h1v1h-1zM21 7h1v1h-1zM18 8h3v1h-3z" fill="#222228"/></svg>
<svg style="left:243px;top:212px" width="32" height="32" viewBox="0 0 32 32"><defs><linearGradient id="spk" x1="0" x2="1"><stop offset="0" stop-color="#808080"/><stop offset="0.45" stop-color="#f4f4f4"/><stop offset="1" stop-color="#707070"/></linearGradient><linearGradient id="spo" x1="0" x2="1"><stop offset="0" stop-color="#c06000"/><stop offset="0.5" stop-color="#ffb030"/><stop offset="1" stop-color="#c06000"/></linearGradient></defs><rect x="5" y="10.5" width="7" height="11" rx="1.5" fill="url(#spo)" stroke="#703000" stroke-width="0.8"/><path d="M12 10.5L22.5 0.5V31.5L12 21.5Z" fill="url(#spk)" stroke="#303030"/><rect x="23" y="12" width="3.5" height="8" rx="1.5" fill="#252525"/></svg>
<svg style="left:243px;top:252px" width="32" height="32" viewBox="0 0 32 32"><path d="M4 1.5H12Q13 1.5 13 2.5V9.5H10.8V3.6H9.6V9.5H7.4V3.6H6.2V9.5H4Z M14.6 1.5H16.8V9.5H14.6Z M18.4 1.5H24.3Q25.6 1.5 25.6 2.8V8.2Q25.6 9.5 24.3 9.5H18.4Z M20.6 3.6V7.4H23.4V3.6Z M27 1.5H29.2V9.5H27Z" fill="#1a2850" fill-rule="evenodd"/><rect x="4" y="10" width="25" height="22" rx="2" fill="#1a2850"/><path d="M11 14L24 21L11 28Z" fill="#78b0f0"/></svg>
<svg style="left:243px;top:292px" width="32" height="32" viewBox="0 0 32 32"><rect x="0.5" y="0.5" width="31" height="30" fill="#fff" stroke="#000"/><rect x="1" y="1" width="9" height="30" fill="#c8d0f4"/><rect x="11" y="1" width="10" height="4" fill="#5078d0"/><rect x="1" y="10" width="9" height="4" fill="#5078d0"/><path d="M0 5.5H32M0 10.5H32M0 15.5H32M0 20.5H32M0 25.5H32M10.5 0V31M21.5 0V31" stroke="#222" stroke-width="0.8"/><rect x="11" y="10" width="10" height="5" fill="#fff" stroke="#000" stroke-width="1.2"/><path d="M13 12.5H19" stroke="#000" stroke-dasharray="1 1"/></svg>
<svg style="left:243px;top:332px" width="32" height="32" viewBox="0 0 32 32"><rect x="0.5" y="5.5" width="31" height="26" fill="#c4c4c4" stroke="#7a7a7a"/><rect x="1.5" y="6.5" width="29" height="24" fill="none" stroke="#e8e8e8"/><rect x="3.5" y="8.5" width="25" height="20" fill="#262626" stroke="#101010"/><path d="M6 11L9.5 13L6 15" stroke="#fff" fill="none" stroke-width="1.4"/><path d="M10.5 15.5H15" stroke="#fff" stroke-width="1.2"/></svg>
<svg style="left:243px;top:372px" width="32" height="32" viewBox="0 0 32 32"><defs><linearGradient id="hm" x1="0" y1="0" x2="1" y2="1"><stop offset="0" stop-color="#f4f4f4"/><stop offset="1" stop-color="#a8a8a8"/></linearGradient></defs><path d="M2 15.5V18.5L14.1 29L32.8 15.7V12.7L14.1 26Z" fill="#8a8a8a" stroke="#181818" stroke-width="0.9"/><path d="M16.5 26.7912v3.5" stroke="#202020" stroke-width="1.6"/><path d="M19.5 24.6552v3.5" stroke="#202020" stroke-width="1.6"/><path d="M22.5 22.519199999999998v3.5" stroke="#202020" stroke-width="1.6"/><path d="M25.5 20.383200000000002v3.5" stroke="#202020" stroke-width="1.6"/><path d="M28.5 18.2472v3.5" stroke="#202020" stroke-width="1.6"/><path d="M31.5 16.111200000000004v3.5" stroke="#202020" stroke-width="1.6"/><path d="M9 24.048000000000002v3" stroke="#202020" stroke-width="1.4"/><path d="M12 26.64v3" stroke="#202020" stroke-width="1.4"/><path d="M2 15.5L24 4.2L32.8 12.7L14.1 26Z" fill="url(#hm)" stroke="#181818" stroke-width="0.9"/><path d="M11.5 17Q11 13 16 12.5H25.5V15.8H21V18H17.5V15.8H14.5Q13 16 12.5 17.5Z" fill="#f4f4f4" stroke="#101010" stroke-width="1.1"/><rect x="17.6" y="19.5" width="3.6" height="12.5" fill="#5a8ed8" stroke="#1a3060" stroke-width="0.8"/></svg>
<svg style="left:243px;top:412px" width="32" height="32" viewBox="0 0 32 32"><rect x="0.5" y="0.5" width="31" height="30" fill="#ececec" stroke="#5a5a5a"/><rect x="3.5" y="5.5" width="25" height="22" fill="#fafafa" stroke="#5a5a5a"/><rect x="23" y="2" width="2" height="2" fill="#5a5a5a"/><rect x="26" y="2" width="2" height="2" fill="#e02020"/></svg>
<svg style="left:371px;top:212px" width="32" height="32" viewBox="0 0 32 32"><rect x="0.5" y="3.5" width="31" height="28" fill="#ececec" stroke="#5a5a5a"/><rect x="3.5" y="7.5" width="25" height="21" fill="#fafafa" stroke="#5a5a5a"/><rect x="23" y="5" width="2" height="2" fill="#5a5a5a"/><rect x="26" y="5" width="2" height="2" fill="#e02020"/></svg>
<svg style="left:371px;top:252px" width="32" height="32" viewBox="0 0 32 32"><path d="M5.5 1.5H29.5Q31 1.5 31 3.5V5H29.5V27.5H5.5Z" fill="#e0e0e0" stroke="#8a8a8a"/><path d="M1 27.5Q1 25.5 4 25.5H25.5V31.5H4Q1 31.5 1 29.5Z" fill="#d4d4d4" stroke="#8a8a8a"/><path d="M8 5.5H26M8 8H26M8 10.5H26M8 13H26M8 15.5H26M8 18H26M8 20.5H26M8 23H20" stroke="#9a9a9a" stroke-dasharray="2.5 1"/></svg>
<svg style="left:368px;top:296px" width="38" height="30" viewBox="0 0 38 30"><defs><linearGradient id="hx" x1="0" y1="0" x2="0" y2="1"><stop offset="0" stop-color="#40e8ff"/><stop offset="0.45" stop-color="#1090ff"/><stop offset="1" stop-color="#0048d0"/></linearGradient></defs><path d="M5 3.8H17L19.1 5.9V12L18 13.6L19.1 15.2V23.7L17 25.8H5L2.9 23.7V15.2L4 13.6L2.9 12V5.9Z M7.9 8.2V12.6H14.1V8.2Z M7.9 17V20.2H14.1V17Z" fill="url(#hx)" fill-rule="evenodd"/><path d="M20.3 3.8H35L33 8.2H25.2V13H32.5L31 17.2H25.2V25.8H20.3Z" fill="url(#hx)"/></svg>
<svg style="left:371px;top:332px" width="32" height="32" viewBox="0 0 32 32"><defs><linearGradient id="hm2" x1="0" y1="0" x2="1" y2="1"><stop offset="0" stop-color="#f4f4f4"/><stop offset="1" stop-color="#a8a8a8"/></linearGradient></defs><path d="M2 15.5V18.5L14.1 29L32.8 15.7V12.7L14.1 26Z" fill="#8a8a8a" stroke="#181818" stroke-width="0.9"/><path d="M16.5 26.7912v3.5" stroke="#202020" stroke-width="1.6"/><path d="M19.5 24.6552v3.5" stroke="#202020" stroke-width="1.6"/><path d="M22.5 22.519199999999998v3.5" stroke="#202020" stroke-width="1.6"/><path d="M25.5 20.383200000000002v3.5" stroke="#202020" stroke-width="1.6"/><path d="M28.5 18.2472v3.5" stroke="#202020" stroke-width="1.6"/><path d="M31.5 16.111200000000004v3.5" stroke="#202020" stroke-width="1.6"/><path d="M9 24.048000000000002v3" stroke="#202020" stroke-width="1.4"/><path d="M12 26.64v3" stroke="#202020" stroke-width="1.4"/><path d="M2 15.5L24 4.2L32.8 12.7L14.1 26Z" fill="url(#hm2)" stroke="#181818" stroke-width="0.9"/><path d="M11.5 17Q11 13 16 12.5H25.5V15.8H21V18H17.5V15.8H14.5Q13 16 12.5 17.5Z" fill="#f4f4f4" stroke="#101010" stroke-width="1.1"/><rect x="17.6" y="19.5" width="3.6" height="12.5" fill="#5a8ed8" stroke="#1a3060" stroke-width="0.8"/></svg>
<svg style="left:371px;top:372px" width="32" height="32" viewBox="0 0 32 32"><defs><radialGradient id="sp" cx="30%" cy="30%" r="85%"><stop offset="0" stop-color="#3060c0"/><stop offset="0.6" stop-color="#1a2a80"/><stop offset="1" stop-color="#101850"/></radialGradient><linearGradient id="cy" x1="0" y1="0" x2="1" y2="1"><stop offset="0" stop-color="#e8fcff"/><stop offset="1" stop-color="#30b8e0"/></linearGradient></defs><rect x="0" y="0" width="32" height="32" fill="url(#sp)"/><circle cx="6" cy="5" r="1.2" fill="#c0f0ff"/><circle cx="27" cy="27" r="1" fill="#fff"/><circle cx="11" cy="2" r="0.6" fill="#fff"/><circle cx="4" cy="29" r="0.7" fill="#fff"/><path d="M1 12L24 1.5L30.5 7V16.5L26 18.5V23.5L21 27.5L12 29L9 26V22L5 24.5L1 22Z" fill="#101020"/><path d="M24 2.5L29.5 7V16L24 14Z M1.5 21.5L4.5 24L9.5 21.5V15.5Z M19.5 16L25.5 14V23L21.5 27L19.5 24Z M9.5 26L12.5 28.5L21.5 27L19.5 24Z" fill="#544a88"/><path d="M1.5 12.5L24 2.5V14L19.5 16V24L9.5 26V20L1.5 21.5Z" fill="url(#cy)"/><path d="M9.5 15.5V26M17 6V17" stroke="#40c0e8" stroke-width="0.8"/></svg>
<div style="left:238px;top:459px;width:16px;height:16px;background:#f6f4f8;border:1px solid #a4b8d4"></div>
<svg style="left:260px;top:463px" width="162" height="9" shape-rendering="crispEdges"><path d="M2 0h1v1h-1zM1 1h1v1h-1zM3 1h1v1h-1zM0 2h1v1h-1zM4 2h1v1h-1zM0 3h1v1h-1zM4 3h1v1h-1zM0 4h5v1h-5zM0 5h1v1h-1zM4 5h1v1h-1zM0 6h1v1h-1zM4 6h1v1h-1zM7 0h2v1h-2zM8 1h1v1h-1zM8 2h1v1h-1zM8 3h1v1h-1zM8 4h1v1h-1zM8 5h1v1h-1zM7 6h3v1h-3zM12 2h1v1h-1zM16 2h1v1h-1zM12 3h1v1h-1zM16 3h1v1h-1zM12 4h1v1h-1zM14 4h1v1h-1zM16 4h1v1h-1zM12 5h1v1h-1zM14 5h1v1h-1zM16 5h1v1h-1zM13 6h1v1h-1zM15 6h1v1h-1zM19 2h3v1h-3zM22 3h1v1h-1zM19 4h4v1h-4zM18 5h1v1h-1zM22 5h1v1h-1zM19 6h4v1h-4zM24 2h1v1h-1zM28 2h1v1h-1zM24 3h1v1h-1zM28 3h1v1h-1zM24 4h1v1h-1zM28 4h1v1h-1zM24 5h1v1h-1zM28 5h1v1h-1zM25 6h4v1h-4zM28 7h1v1h-1zM25 8h3v1h-3zM31 2h4v1h-4zM30 3h1v1h-1zM31 4h3v1h-3zM34 5h1v1h-1zM30 6h4v1h-4zM42 2h1v1h-1zM46 2h1v1h-1zM42 3h1v1h-1zM46 3h1v1h-1zM42 4h1v1h-1zM46 4h1v1h-1zM42 5h1v1h-1zM46 5h1v1h-1zM43 6h4v1h-4zM49 2h4v1h-4zM48 3h1v1h-1zM49 4h3v1h-3zM52 5h1v1h-1zM48 6h4v1h-4zM55 2h3v1h-3zM54 3h1v1h-1zM58 3h1v1h-1zM54 4h5v1h-5zM54 5h1v1h-1zM55 6h3v1h-3zM67 2h4v1h-4zM66 3h1v1h-1zM67 4h3v1h-3zM70 5h1v1h-1zM66 6h4v1h-4zM73 2h3v1h-3zM72 3h1v1h-1zM76 3h1v1h-1zM72 4h5v1h-5zM72 5h1v1h-1zM73 6h3v1h-3zM79 0h2v1h-2zM80 1h1v1h-1zM80 2h1v1h-1zM80 3h1v1h-1zM80 4h1v1h-1zM80 5h1v1h-1zM79 6h3v1h-3zM85 2h3v1h-3zM84 3h1v1h-1zM88 3h1v1h-1zM84 4h5v1h-5zM84 5h1v1h-1zM85 6h3v1h-3zM91 2h4v1h-4zM90 3h1v1h-1zM90 4h1v1h-1zM90 5h1v1h-1zM91 6h4v1h-4zM98 0h1v1h-1zM98 1h1v1h-1zM97 2h3v1h-3zM98 3h1v1h-1zM98 4h1v1h-1zM98 5h1v1h-1zM99 6h2v1h-2zM103 2h3v1h-3zM102 3h1v1h-1zM106 3h1v1h-1zM102 4h5v1h-5zM102 5h1v1h-1zM103 6h3v1h-3zM112 0h1v1h-1zM112 1h1v1h-1zM109 2h4v1h-4zM108 3h1v1h-1zM112 3h1v1h-1zM108 4h1v1h-1zM112 4h1v1h-1zM108 5h1v1h-1zM112 5h1v1h-1zM109 6h4v1h-4zM120 2h4v1h-4zM120 3h1v1h-1zM124 3h1v1h-1zM120 4h1v1h-1zM124 4h1v1h-1zM120 5h1v1h-1zM124 5h1v1h-1zM120 6h4v1h-4zM120 7h1v1h-1zM120 8h1v1h-1zM127 2h4v1h-4zM127 3h1v1h-1zM127 4h1v1h-1zM127 5h1v1h-1zM127 6h1v1h-1zM133 2h3v1h-3zM132 3h1v1h-1zM136 3h1v1h-1zM132 4h1v1h-1zM136 4h1v1h-1zM132 5h1v1h-1zM136 5h1v1h-1zM133 6h3v1h-3zM139 2h4v1h-4zM138 3h1v1h-1zM142 3h1v1h-1zM138 4h1v1h-1zM142 4h1v1h-1zM138 5h1v1h-1zM142 5h1v1h-1zM139 6h4v1h-4zM142 7h1v1h-1zM139 8h3v1h-3zM145 2h4v1h-4zM145 3h1v1h-1zM145 4h1v1h-1zM145 5h1v1h-1zM145 6h1v1h-1zM151 2h3v1h-3zM154 3h1v1h-1zM151 4h4v1h-4zM150 5h1v1h-1zM154 5h1v1h-1zM151 6h4v1h-4zM156 2h2v1h-2zM159 2h1v1h-1zM156 3h1v1h-1zM158 3h1v1h-1zM160 3h1v1h-1zM156 4h1v1h-1zM158 4h1v1h-1zM160 4h1v1h-1zM156 5h1v1h-1zM158 5h1v1h-1zM160 5h1v1h-1zM156 6h1v1h-1zM158 6h1v1h-1zM160 6h1v1h-1z" fill="#222228"/></svg>
<div style="left:440px;top:455px;width:66px;height:22px;background:#e8e6ea;border:1px solid #7e9ccc"></div>
<svg style="left:447px;top:463px" width="54" height="9" shape-rendering="crispEdges"><path d="M0 0h4v1h-4zM0 1h1v1h-1zM4 1h1v1h-1zM0 2h1v1h-1zM4 2h1v1h-1zM0 3h4v1h-4zM0 4h1v1h-1zM4 4h1v1h-1zM0 5h1v1h-1zM4 5h1v1h-1zM0 6h4v1h-4zM7 2h4v1h-4zM7 3h1v1h-1zM7 4h1v1h-1zM7 5h1v1h-1zM7 6h1v1h-1zM13 2h3v1h-3zM12 3h1v1h-1zM16 3h1v1h-1zM12 4h1v1h-1zM16 4h1v1h-1zM12 5h1v1h-1zM16 5h1v1h-1zM13 6h3v1h-3zM18 2h1v1h-1zM22 2h1v1h-1zM18 3h1v1h-1zM22 3h1v1h-1zM18 4h1v1h-1zM20 4h1v1h-1zM22 4h1v1h-1zM18 5h1v1h-1zM20 5h1v1h-1zM22 5h1v1h-1zM19 6h1v1h-1zM21 6h1v1h-1zM25 2h4v1h-4zM24 3h1v1h-1zM25 4h3v1h-3zM28 5h1v1h-1zM24 6h4v1h-4zM31 2h3v1h-3zM30 3h1v1h-1zM34 3h1v1h-1zM30 4h5v1h-5zM30 5h1v1h-1zM31 6h3v1h-3zM37 5h2v1h-2zM37 6h2v1h-2zM43 5h2v1h-2zM43 6h2v1h-2zM49 5h2v1h-2zM49 6h2v1h-2z" fill="#222228"/></svg>
<svg style="left:614px;top:203px" width="12" height="18" viewBox="0 0 12 18"><path d="M0.5 0.5V14.5L3.5 11.5L6 16.5L8.5 15.5L6.5 10.5H10.5Z" fill="#fff" stroke="#000" stroke-width="1.1"/></svg>
<svg style="left:654px;top:249px" width="26" height="32" viewBox="0 0 26 32"><path d="M0.5 0.5H18.5L25.5 7.5V31.5H0.5Z" fill="#f6f6f6" stroke="#909090"/>
<path d="M0 0H18.5L20 1.5V8.5H0Z" fill="#d42a2a"/><path d="M18.5 0.5V7.5H25.5" fill="#dedede" stroke="#a0a0a0"/>
<text x="3" y="7.3" font-family="Liberation Sans" font-weight="bold" font-size="7.5" fill="#fff" letter-spacing="0.3">PDF</text>
<rect x="3.5" y="12.5" width="6" height="5" fill="#c0c0c0" stroke="#909090"/>
<path d="M11 12.5H17M18 12.5H22M11 14.5H15M16 14.5H22M11 16.5H13M14 16.5H19M20 16.5H23M3 18.5H5M6 18.5H9M10 18.5H12M13 18.5H17M18 18.5H23M3 20.5H6M7 20.5H12M13 20.5H19M20 20.5H22M3 22.5H9M10 22.5H13M14 22.5H16M17 22.5H20M21 22.5H23M3 24.5H7M8 24.5H11M12 24.5H17M18 24.5H21M22 24.5H23M3 26.5H6M7 26.5H13M14 26.5H20M21 26.5H23M3 28.5H6M7 28.5H10M11 28.5H13M14 28.5H16M17 28.5H20M21 28.5H23" stroke="#9a9a9a" stroke-width="1"/></svg>
<svg style="left:654px;top:293px" width="24" height="9" shape-rendering="crispEdges"><path d="M0 2h1v1h-1zM4 2h1v1h-1zM0 3h1v1h-1zM4 3h1v1h-1zM0 4h1v1h-1zM4 4h1v1h-1zM0 5h1v1h-1zM4 5h1v1h-1zM1 6h4v1h-4zM6 0h4v1h-4zM6 1h1v1h-1zM10 1h1v1h-1zM6 2h1v1h-1zM10 2h1v1h-1zM6 3h4v1h-4zM6 4h1v1h-1zM6 5h1v1h-1zM6 6h1v1h-1zM12 0h4v1h-4zM12 1h1v1h-1zM16 1h1v1h-1zM12 2h1v1h-1zM16 2h1v1h-1zM12 3h1v1h-1zM16 3h1v1h-1zM12 4h1v1h-1zM16 4h1v1h-1zM12 5h1v1h-1zM16 5h1v1h-1zM12 6h4v1h-4zM18 0h5v1h-5zM18 1h1v1h-1zM18 2h1v1h-1zM18 3h4v1h-4zM18 4h1v1h-1zM18 5h1v1h-1zM18 6h1v1h-1z" transform="translate(-1 0)" fill="#000"/><path d="M0 2h1v1h-1zM4 2h1v1h-1zM0 3h1v1h-1zM4 3h1v1h-1zM0 4h1v1h-1zM4 4h1v1h-1zM0 5h1v1h-1zM4 5h1v1h-1zM1 6h4v1h-4zM6 0h4v1h-4zM6 1h1v1h-1zM10 1h1v1h-1zM6 2h1v1h-1zM10 2h1v1h-1zM6 3h4v1h-4zM6 4h1v1h-1zM6 5h1v1h-1zM6 6h1v1h-1zM12 0h4v1h-4zM12 1h1v1h-1zM16 1h1v1h-1zM12 2h1v1h-1zM16 2h1v1h-1zM12 3h1v1h-1zM16 3h1v1h-1zM12 4h1v1h-1zM16 4h1v1h-1zM12 5h1v1h-1zM16 5h1v1h-1zM12 6h4v1h-4zM18 0h5v1h-5zM18 1h1v1h-1zM18 2h1v1h-1zM18 3h4v1h-4zM18 4h1v1h-1zM18 5h1v1h-1zM18 6h1v1h-1z" transform="translate(1 0)" fill="#000"/><path d="M0 2h1v1h-1zM4 2h1v1h-1zM0 3h1v1h-1zM4 3h1v1h-1zM0 4h1v1h-1zM4 4h1v1h-1zM0 5h1v1h-1zM4 5h1v1h-1zM1 6h4v1h-4zM6 0h4v1h-4zM6 1h1v1h-1zM10 1h1v1h-1zM6 2h1v1h-1zM10 2h1v1h-1zM6 3h4v1h-4zM6 4h1v1h-1zM6 5h1v1h-1zM6 6h1v1h-1zM12 0h4v1h-4zM12 1h1v1h-1zM16 1h1v1h-1zM12 2h1v1h-1zM16 2h1v1h-1zM12 3h1v1h-1zM16 3h1v1h-1zM12 4h1v1h-1zM16 4h1v1h-1zM12 5h1v1h-1zM16 5h1v1h-1zM12 6h4v1h-4zM18 0h5v1h-5zM18 1h1v1h-1zM18 2h1v1h-1zM18 3h4v1h-4zM18 4h1v1h-1zM18 5h1v1h-1zM18 6h1v1h-1z" transform="translate(0 -1)" fill="#000"/><path d="M0 2h1v1h-1zM4 2h1v1h-1zM0 3h1v1h-1zM4 3h1v1h-1zM0 4h1v1h-1zM4 4h1v1h-1zM0 5h1v1h-1zM4 5h1v1h-1zM1 6h4v1h-4zM6 0h4v1h-4zM6 1h1v1h-1zM10 1h1v1h-1zM6 2h1v1h-1zM10 2h1v1h-1zM6 3h4v1h-4zM6 4h1v1h-1zM6 5h1v1h-1zM6 6h1v1h-1zM12 0h4v1h-4zM12 1h1v1h-1zM16 1h1v1h-1zM12 2h1v1h-1zM16 2h1v1h-1zM12 3h1v1h-1zM16 3h1v1h-1zM12 4h1v1h-1zM16 4h1v1h-1zM12 5h1v1h-1zM16 5h1v1h-1zM12 6h4v1h-4zM18 0h5v1h-5zM18 1h1v1h-1zM18 2h1v1h-1zM18 3h4v1h-4zM18 4h1v1h-1zM18 5h1v1h-1zM18 6h1v1h-1z" transform="translate(0 1)" fill="#000"/><path d="M0 2h1v1h-1zM4 2h1v1h-1zM0 3h1v1h-1zM4 3h1v1h-1zM0 4h1v1h-1zM4 4h1v1h-1zM0 5h1v1h-1zM4 5h1v1h-1zM1 6h4v1h-4zM6 0h4v1h-4zM6 1h1v1h-1zM10 1h1v1h-1zM6 2h1v1h-1zM10 2h1v1h-1zM6 3h4v1h-4zM6 4h1v1h-1zM6 5h1v1h-1zM6 6h1v1h-1zM12 0h4v1h-4zM12 1h1v1h-1zM16 1h1v1h-1zM12 2h1v1h-1zM16 2h1v1h-1zM12 3h1v1h-1zM16 3h1v1h-1zM12 4h1v1h-1zM16 4h1v1h-1zM12 5h1v1h-1zM16 5h1v1h-1zM12 6h4v1h-4zM18 0h5v1h-5zM18 1h1v1h-1zM18 2h1v1h-1zM18 3h4v1h-4zM18 4h1v1h-1zM18 5h1v1h-1zM18 6h1v1h-1z" transform="translate(-1 -1)" fill="#000"/><path d="M0 2h1v1h-1zM4 2h1v1h-1zM0 3h1v1h-1zM4 3h1v1h-1zM0 4h1v1h-1zM4 4h1v1h-1zM0 5h1v1h-1zM4 5h1v1h-1zM1 6h4v1h-4zM6 0h4v1h-4zM6 1h1v1h-1zM10 1h1v1h-1zM6 2h1v1h-1zM10 2h1v1h-1zM6 3h4v1h-4zM6 4h1v1h-1zM6 5h1v1h-1zM6 6h1v1h-1zM12 0h4v1h-4zM12 1h1v1h-1zM16 1h1v1h-1zM12 2h1v1h-1zM16 2h1v1h-1zM12 3h1v1h-1zM16 3h1v1h-1zM12 4h1v1h-1zM16 4h1v1h-1zM12 5h1v1h-1zM16 5h1v1h-1zM12 6h4v1h-4zM18 0h5v1h-5zM18 1h1v1h-1zM18 2h1v1h-1zM18 3h4v1h-4zM18 4h1v1h-1zM18 5h1v1h-1zM18 6h1v1h-1z" transform="translate(1 1)" fill="#000"/><path d="M0 2h1v1h-1zM4 2h1v1h-1zM0 3h1v1h-1zM4 3h1v1h-1zM0 4h1v1h-1zM4 4h1v1h-1zM0 5h1v1h-1zM4 5h1v1h-1zM1 6h4v1h-4zM6 0h4v1h-4zM6 1h1v1h-1zM10 1h1v1h-1zM6 2h1v1h-1zM10 2h1v1h-1zM6 3h4v1h-4zM6 4h1v1h-1zM6 5h1v1h-1zM6 6h1v1h-1zM12 0h4v1h-4zM12 1h1v1h-1zM16 1h1v1h-1zM12 2h1v1h-1zM16 2h1v1h-1zM12 3h1v1h-1zM16 3h1v1h-1zM12 4h1v1h-1zM16 4h1v1h-1zM12 5h1v1h-1zM16 5h1v1h-1zM12 6h4v1h-4zM18 0h5v1h-5zM18 1h1v1h-1zM18 2h1v1h-1zM18 3h4v1h-4zM18 4h1v1h-1zM18 5h1v1h-1zM18 6h1v1h-1z" transform="translate(-1 1)" fill="#000"/><path d="M0 2h1v1h-1zM4 2h1v1h-1zM0 3h1v1h-1zM4 3h1v1h-1zM0 4h1v1h-1zM4 4h1v1h-1zM0 5h1v1h-1zM4 5h1v1h-1zM1 6h4v1h-4zM6 0h4v1h-4zM6 1h1v1h-1zM10 1h1v1h-1zM6 2h1v1h-1zM10 2h1v1h-1zM6 3h4v1h-4zM6 4h1v1h-1zM6 5h1v1h-1zM6 6h1v1h-1zM12 0h4v1h-4zM12 1h1v1h-1zM16 1h1v1h-1zM12 2h1v1h-1zM16 2h1v1h-1zM12 3h1v1h-1zM16 3h1v1h-1zM12 4h1v1h-1zM16 4h1v1h-1zM12 5h1v1h-1zM16 5h1v1h-1zM12 6h4v1h-4zM18 0h5v1h-5zM18 1h1v1h-1zM18 2h1v1h-1zM18 3h4v1h-4zM18 4h1v1h-1zM18 5h1v1h-1zM18 6h1v1h-1z" transform="translate(1 -1)" fill="#000"/><path d="M0 2h1v1h-1zM4 2h1v1h-1zM0 3h1v1h-1zM4 3h1v1h-1zM0 4h1v1h-1zM4 4h1v1h-1zM0 5h1v1h-1zM4 5h1v1h-1zM1 6h4v1h-4zM6 0h4v1h-4zM6 1h1v1h-1zM10 1h1v1h-1zM6 2h1v1h-1zM10 2h1v1h-1zM6 3h4v1h-4zM6 4h1v1h-1zM6 5h1v1h-1zM6 6h1v1h-1zM12 0h4v1h-4zM12 1h1v1h-1zM16 1h1v1h-1zM12 2h1v1h-1zM16 2h1v1h-1zM12 3h1v1h-1zM16 3h1v1h-1zM12 4h1v1h-1zM16 4h1v1h-1zM12 5h1v1h-1zM16 5h1v1h-1zM12 6h4v1h-4zM18 0h5v1h-5zM18 1h1v1h-1zM18 2h1v1h-1zM18 3h4v1h-4zM18 4h1v1h-1zM18 5h1v1h-1zM18 6h1v1h-1z" transform="translate(0 2)" fill="#000"/><path d="M0 2h1v1h-1zM4 2h1v1h-1zM0 3h1v1h-1zM4 3h1v1h-1zM0 4h1v1h-1zM4 4h1v1h-1zM0 5h1v1h-1zM4 5h1v1h-1zM1 6h4v1h-4zM6 0h4v1h-4zM6 1h1v1h-1zM10 1h1v1h-1zM6 2h1v1h-1zM10 2h1v1h-1zM6 3h4v1h-4zM6 4h1v1h-1zM6 5h1v1h-1zM6 6h1v1h-1zM12 0h4v1h-4zM12 1h1v1h-1zM16 1h1v1h-1zM12 2h1v1h-1zM16 2h1v1h-1zM12 3h1v1h-1zM16 3h1v1h-1zM12 4h1v1h-1zM16 4h1v1h-1zM12 5h1v1h-1zM16 5h1v1h-1zM12 6h4v1h-4zM18 0h5v1h-5zM18 1h1v1h-1zM18 2h1v1h-1zM18 3h4v1h-4zM18 4h1v1h-1zM18 5h1v1h-1zM18 6h1v1h-1z" transform="translate(1 2)" fill="#000"/><path d="M0 2h1v1h-1zM4 2h1v1h-1zM0 3h1v1h-1zM4 3h1v1h-1zM0 4h1v1h-1zM4 4h1v1h-1zM0 5h1v1h-1zM4 5h1v1h-1zM1 6h4v1h-4zM6 0h4v1h-4zM6 1h1v1h-1zM10 1h1v1h-1zM6 2h1v1h-1zM10 2h1v1h-1zM6 3h4v1h-4zM6 4h1v1h-1zM6 5h1v1h-1zM6 6h1v1h-1zM12 0h4v1h-4zM12 1h1v1h-1zM16 1h1v1h-1zM12 2h1v1h-1zM16 2h1v1h-1zM12 3h1v1h-1zM16 3h1v1h-1zM12 4h1v1h-1zM16 4h1v1h-1zM12 5h1v1h-1zM16 5h1v1h-1zM12 6h4v1h-4zM18 0h5v1h-5zM18 1h1v1h-1zM18 2h1v1h-1zM18 3h4v1h-4zM18 4h1v1h-1zM18 5h1v1h-1zM18 6h1v1h-1z" transform="translate(-1 2)" fill="#000"/><path d="M0 2h1v1h-1zM4 2h1v1h-1zM0 3h1v1h-1zM4 3h1v1h-1zM0 4h1v1h-1zM4 4h1v1h-1zM0 5h1v1h-1zM4 5h1v1h-1zM1 6h4v1h-4zM6 0h4v1h-4zM6 1h1v1h-1zM10 1h1v1h-1zM6 2h1v1h-1zM10 2h1v1h-1zM6 3h4v1h-4zM6 4h1v1h-1zM6 5h1v1h-1zM6 6h1v1h-1zM12 0h4v1h-4zM12 1h1v1h-1zM16 1h1v1h-1zM12 2h1v1h-1zM16 2h1v1h-1zM12 3h1v1h-1zM16 3h1v1h-1zM12 4h1v1h-1zM16 4h1v1h-1zM12 5h1v1h-1zM16 5h1v1h-1zM12 6h4v1h-4zM18 0h5v1h-5zM18 1h1v1h-1zM18 2h1v1h-1zM18 3h4v1h-4zM18 4h1v1h-1zM18 5h1v1h-1zM18 6h1v1h-1z" fill="#fff"/></svg>
</body></html>
